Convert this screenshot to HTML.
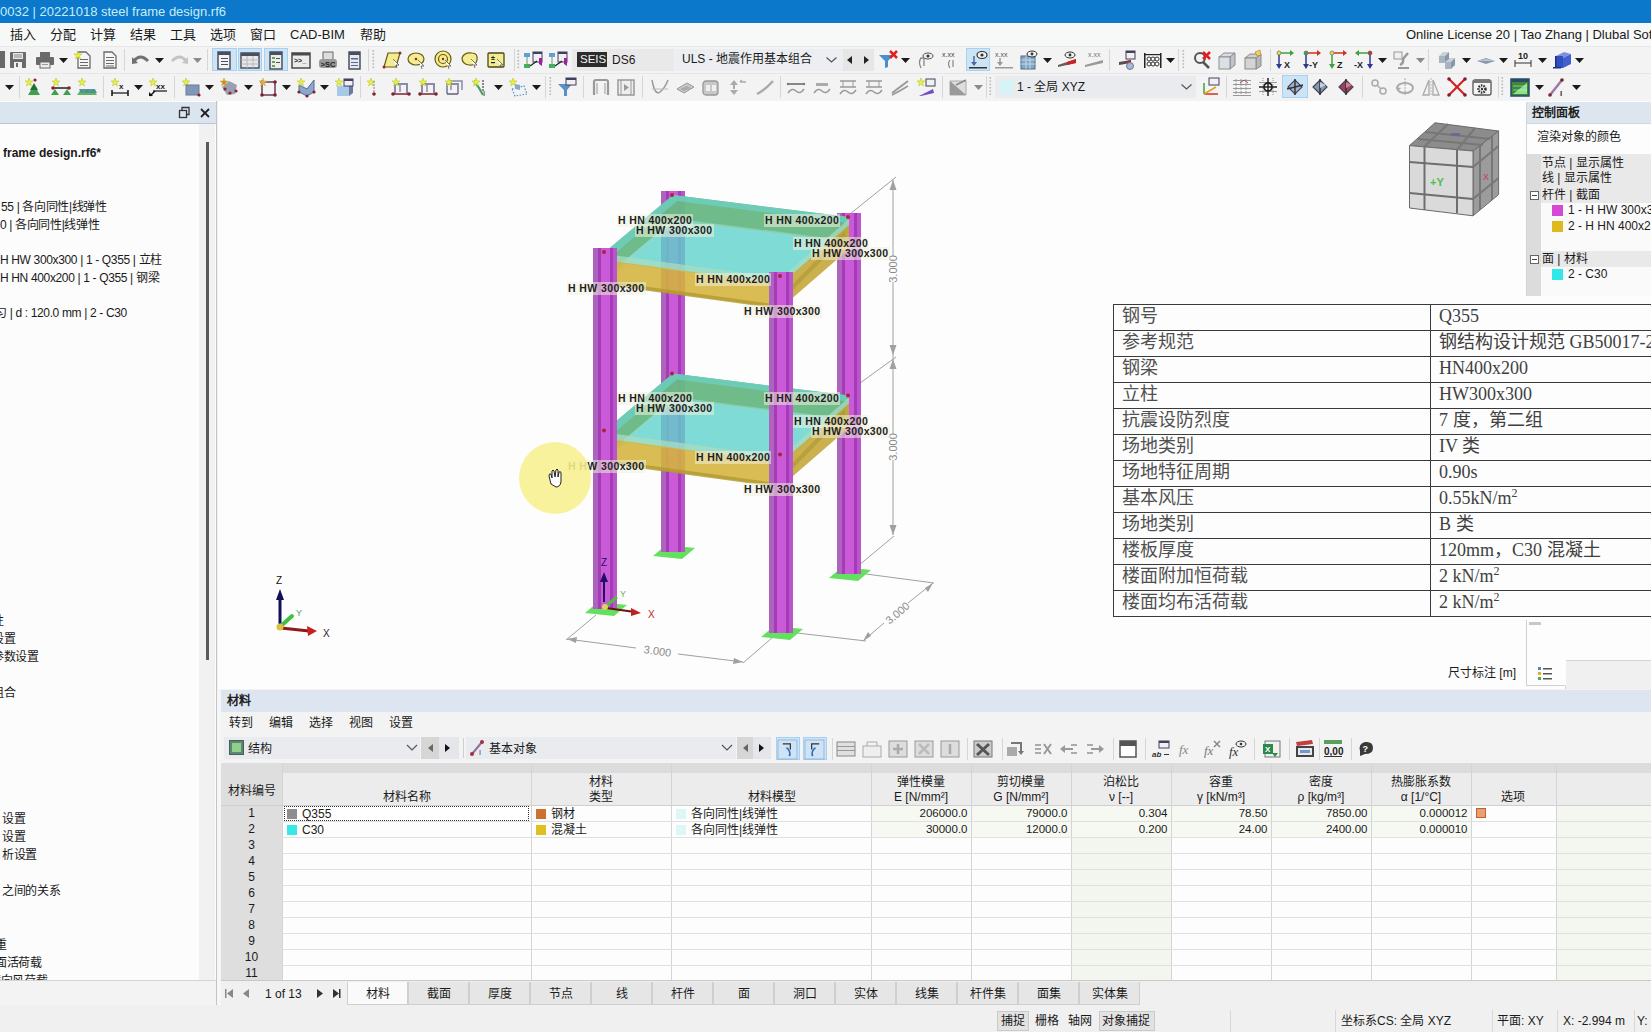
<!DOCTYPE html><html lang="zh-CN"><head><meta charset="utf-8"><style>
*{margin:0;padding:0;box-sizing:border-box}
html,body{width:1651px;height:1032px;overflow:hidden;background:#f0f0f0;font-family:"Liberation Sans",sans-serif;font-size:12px;color:#1a1a1a}
.a{position:absolute}
.t{position:absolute;white-space:nowrap;line-height:1}
.sp{font-size:12px;vertical-align:7px;line-height:0}
svg{position:absolute;overflow:visible}
</style></head><body>
<div class="a" style="left:0px;top:0px;width:1651px;height:23px;background:#0b78cc"></div>
<div class="t" style="left:0px;top:5px;font-size:13px;color:#c4eefa;">0032 | 20221018 steel frame design.rf6</div>
<div class="a" style="left:0px;top:23px;width:1651px;height:23px;background:#f7f8f8"></div>
<div class="t" style="left:10px;top:28px;font-size:13px;color:#1a1a1a;">插入</div>
<div class="t" style="left:50px;top:28px;font-size:13px;color:#1a1a1a;">分配</div>
<div class="t" style="left:90px;top:28px;font-size:13px;color:#1a1a1a;">计算</div>
<div class="t" style="left:130px;top:28px;font-size:13px;color:#1a1a1a;">结果</div>
<div class="t" style="left:170px;top:28px;font-size:13px;color:#1a1a1a;">工具</div>
<div class="t" style="left:210px;top:28px;font-size:13px;color:#1a1a1a;">选项</div>
<div class="t" style="left:250px;top:28px;font-size:13px;color:#1a1a1a;">窗口</div>
<div class="t" style="left:290px;top:28px;font-size:13px;color:#1a1a1a;">CAD-BIM</div>
<div class="t" style="left:360px;top:28px;font-size:13px;color:#1a1a1a;">帮助</div>
<div class="t" style="left:1406px;top:28px;font-size:13px;color:#1a1a1a;">Online License 20 | Tao Zhang | Dlubal Software</div>
<div class="a" style="left:0px;top:46px;width:1651px;height:55px;background:#f3f3f3;border-top:1px solid #e8e8e8"></div>
<div class="a" style="left:0px;top:73px;width:1651px;height:1px;background:#e6e6e6"></div>
<div class="a" style="left:0px;top:51px;width:5px;height:17px;background:#6a6a6a"></div>
<svg class="a" style="left:8px;top:50.0px" width="20" height="20" viewBox="0 0 20 20"><rect x="2" y="2" width="16" height="16" rx="1" fill="#6a6a6a"/><rect x="5" y="3" width="10" height="6" fill="#e8e8e8"/><rect x="6" y="4.5" width="8" height="1" fill="#888"/><rect x="6" y="6.5" width="8" height="1" fill="#888"/><rect x="6" y="12" width="8" height="6" fill="#f0f0f0"/><rect x="8" y="13" width="2" height="4" fill="#6a6a6a"/></svg>
<svg class="a" style="left:35px;top:50.0px" width="20" height="20" viewBox="0 0 20 20"><rect x="5" y="2" width="10" height="5" fill="#6a6a6a"/><rect x="1" y="7" width="18" height="8" rx="1" fill="#6a6a6a"/><rect x="5" y="12" width="10" height="6" fill="#eee" stroke="#6a6a6a"/><rect x="7" y="14" width="6" height="1" fill="#999"/></svg>
<svg class="a" style="left:58.5px;top:58px" width="9" height="5"><polygon points="0,0 9,0 4.5,5" fill="#1a1a1a"/></svg>
<svg class="a" style="left:73px;top:50.0px" width="20" height="20" viewBox="0 0 20 20"><path d="M5,2 H13 L17,6 V18 H5 Z" fill="#f6f6f6" stroke="#6a6a6a" stroke-width="1.3"/><rect x="7" y="9" width="8" height="1" fill="#6a6a6a"/><rect x="7" y="12" width="8" height="1" fill="#6a6a6a"/><rect x="7" y="15" width="8" height="1" fill="#6a6a6a"/><polygon points="5,1 6,4 9,4 6.5,6 7.5,9 5,7 2.5,9 3.5,6 1,4 4,4" fill="#e8f040" stroke="#b0c020" stroke-width="0.5"/></svg>
<svg class="a" style="left:100px;top:50.0px" width="20" height="20" viewBox="0 0 20 20"><path d="M4,2 H12 L16,6 V18 H4 Z" fill="#f6f6f6" stroke="#6a6a6a" stroke-width="1.3"/><rect x="6" y="7" width="8" height="1" fill="#6a6a6a"/><rect x="6" y="10" width="8" height="1" fill="#6a6a6a"/><rect x="6" y="13" width="8" height="1" fill="#6a6a6a"/><rect x="6" y="15.5" width="8" height="1" fill="#6a6a6a"/></svg>
<div class="a" style="left:124px;top:49px;width:1px;height:22px;background:#d6d6d6"></div>
<svg class="a" style="left:131px;top:50.0px" width="20" height="20" viewBox="0 0 20 20"><path d="M3,11 Q9,3 17,11" fill="none" stroke="#707070" stroke-width="3"/><polygon points="1,7 7,13 1,14" fill="#707070"/></svg>
<svg class="a" style="left:154.5px;top:58px" width="9" height="5"><polygon points="0,0 9,0 4.5,5" fill="#1a1a1a"/></svg>
<svg class="a" style="left:169px;top:50.0px" width="20" height="20" viewBox="0 0 20 20"><path d="M3,11 Q11,3 17,11" fill="none" stroke="#c4c4c4" stroke-width="3"/><polygon points="19,7 13,13 19,14" fill="#c4c4c4"/></svg>
<svg class="a" style="left:192.5px;top:58px" width="9" height="5"><polygon points="0,0 9,0 4.5,5" fill="#8a8a8a"/></svg>
<div class="a" style="left:207px;top:49px;width:1px;height:22px;background:#d6d6d6"></div>
<div class="a" style="left:212px;top:48px;width:25px;height:23px;background:#cde4f7;border:1px solid #a8d0f0"></div>
<div class="a" style="left:238px;top:48px;width:24px;height:23px;background:#cde4f7;border:1px solid #a8d0f0"></div>
<div class="a" style="left:264px;top:48px;width:24px;height:23px;background:#cde4f7;border:1px solid #a8d0f0"></div>
<svg class="a" style="left:214px;top:50.0px" width="20" height="20" viewBox="0 0 20 20"><rect x="4" y="2" width="12" height="17" fill="#f4f4f4" stroke="#4a5060" stroke-width="1.5"/><rect x="4" y="2" width="12" height="3" fill="#4a5060"/><g fill="#4a5060"><rect x="7" y="8" width="7" height="1"/><rect x="7" y="11" width="7" height="1"/><rect x="7" y="14" width="7" height="1"/></g></svg>
<svg class="a" style="left:240px;top:50.0px" width="20" height="20" viewBox="0 0 20 20"><rect x="1" y="3" width="18" height="15" fill="#e8e8e8" stroke="#4a5060" stroke-width="1.5"/><rect x="1" y="3" width="18" height="3" fill="#4a5060"/><g stroke="#b8b8b8" stroke-width="1"><line x1="1" y1="10" x2="19" y2="10"/><line x1="1" y1="14" x2="19" y2="14"/><line x1="7" y1="6" x2="7" y2="18"/><line x1="13" y1="6" x2="13" y2="18"/></g></svg>
<svg class="a" style="left:266px;top:50.0px" width="20" height="20" viewBox="0 0 20 20"><rect x="4" y="2" width="12" height="17" fill="#e8f0e8" stroke="#4a5060" stroke-width="1.5"/><rect x="4" y="2" width="12" height="3" fill="#4a5060"/><g fill="#7a9a60"><rect x="6" y="7" width="3" height="2"/><rect x="6" y="11" width="3" height="2"/><rect x="6" y="15" width="3" height="2"/></g><g fill="#4a5060"><rect x="10" y="8" width="4" height="1"/><rect x="10" y="12" width="4" height="1"/></g></svg>
<svg class="a" style="left:291px;top:50.0px" width="20" height="20" viewBox="0 0 20 20"><rect x="1" y="3" width="18" height="15" fill="#ececec" stroke="#4a4a4a" stroke-width="1.5"/><rect x="1" y="3" width="18" height="2.5" fill="#4a4a4a"/><text x="3" y="13" font-size="7" font-weight="bold" fill="#222">&gt;&gt;_</text></svg>
<svg class="a" style="left:318px;top:50.0px" width="20" height="20" viewBox="0 0 20 20"><rect x="5" y="2" width="10" height="8" fill="#ddd" stroke="#666"/><rect x="1" y="9" width="18" height="9" rx="3" fill="#999"/><text x="2.5" y="16.5" font-size="7.5" font-weight="bold" fill="#222">&gt;SC</text></svg>
<svg class="a" style="left:344px;top:50.0px" width="20" height="20" viewBox="0 0 20 20"><rect x="5" y="2" width="11" height="17" fill="#e8e8f0" stroke="#4a5060" stroke-width="1.5"/><rect x="5" y="2" width="11" height="3" fill="#4a5060"/><g fill="#5a6a90"><rect x="7" y="8" width="7" height="1.5"/><rect x="7" y="12" width="7" height="1"/><rect x="7" y="15" width="7" height="1"/></g></svg>
<div class="a" style="left:368px;top:49px;width:1px;height:22px;background:#d6d6d6"></div>
<svg class="a" style="left:372px;top:50px" width="3" height="20"><rect x="0.5" y="0.0" width="1.6" height="1.6" fill="#b8b8b8"/><rect x="0.5" y="3.3" width="1.6" height="1.6" fill="#b8b8b8"/><rect x="0.5" y="6.6" width="1.6" height="1.6" fill="#b8b8b8"/><rect x="0.5" y="9.899999999999999" width="1.6" height="1.6" fill="#b8b8b8"/><rect x="0.5" y="13.2" width="1.6" height="1.6" fill="#b8b8b8"/><rect x="0.5" y="16.5" width="1.6" height="1.6" fill="#b8b8b8"/></svg>
<svg class="a" style="left:382px;top:50.0px" width="20" height="20" viewBox="0 0 20 20"><polygon points="6,3 18,3 14,17 2,17" fill="#f4ec90" stroke="#6a5a10" stroke-width="1.2"/><circle cx="2" cy="17" r="1.5" fill="#903020"/><circle cx="18" cy="3" r="1.5" fill="#903020"/><path d="M11,9 L17,15 L14,15 L15,18" fill="#fff" stroke="#555" stroke-width="0.8"/></svg>
<svg class="a" style="left:407px;top:50.0px" width="20" height="20" viewBox="0 0 20 20"><ellipse cx="9" cy="9" rx="8" ry="6" fill="#f4ec90" stroke="#6a5a10" stroke-width="1.2"/><circle cx="9" cy="9" r="1.3" fill="#903020"/><path d="M11,10 L17,16 L14,16 L15,19" fill="#fff" stroke="#555" stroke-width="0.8"/></svg>
<svg class="a" style="left:434px;top:50.0px" width="20" height="20" viewBox="0 0 20 20"><circle cx="9" cy="9" r="8" fill="#f4ec90" stroke="#6a5a10" stroke-width="1.2"/><circle cx="9" cy="9" r="4.5" fill="none" stroke="#6a5a10" stroke-width="1.2"/><circle cx="9" cy="9" r="1.2" fill="#903020"/><path d="M11,10 L17,16 L14,16 L15,19" fill="#fff" stroke="#555" stroke-width="0.8"/></svg>
<svg class="a" style="left:460px;top:50.0px" width="20" height="20" viewBox="0 0 20 20"><path d="M2,8 Q4,2 12,3 Q18,3 17,10 Q16,16 9,15 Q2,14 2,8 Z" fill="#f4ec90" stroke="#6a5a10" stroke-width="1.2"/><path d="M11,9 L17,15 L14,15 L15,18" fill="#fff" stroke="#555" stroke-width="0.8"/></svg>
<svg class="a" style="left:486px;top:50.0px" width="20" height="20" viewBox="0 0 20 20"><rect x="2" y="3" width="16" height="14" rx="1" fill="#f4ec90" stroke="#4a4a10" stroke-width="1.3"/><text x="5" y="10" font-size="7" font-weight="bold" fill="#222">±</text><rect x="5" y="12" width="4" height="1.2" fill="#222"/><path d="M11,9 L17,15 L14,15 L15,18" fill="#fff" stroke="#555" stroke-width="0.8"/></svg>
<div class="a" style="left:514px;top:49px;width:1px;height:22px;background:#d6d6d6"></div>
<svg class="a" style="left:517px;top:50px" width="3" height="20"><rect x="0.5" y="0.0" width="1.6" height="1.6" fill="#b8b8b8"/><rect x="0.5" y="3.3" width="1.6" height="1.6" fill="#b8b8b8"/><rect x="0.5" y="6.6" width="1.6" height="1.6" fill="#b8b8b8"/><rect x="0.5" y="9.899999999999999" width="1.6" height="1.6" fill="#b8b8b8"/><rect x="0.5" y="13.2" width="1.6" height="1.6" fill="#b8b8b8"/><rect x="0.5" y="16.5" width="1.6" height="1.6" fill="#b8b8b8"/></svg>
<svg class="a" style="left:523px;top:50.0px" width="20" height="20" viewBox="0 0 20 20"><rect x="1" y="3" width="6" height="4" fill="#60a0d0"/><rect x="1" y="14" width="6" height="4" fill="#40b060"/><rect x="10" y="2" width="9" height="10" fill="#f0f0f0" stroke="#404060"/><rect x="10" y="2" width="9" height="2" fill="#404060"/><polygon points="16,8 19,8 19,16 16,14" fill="#a020a0"/><line x1="7" y1="16" x2="14" y2="11" stroke="#222" stroke-width="1.3"/><line x1="4" y1="7" x2="4" y2="14" stroke="#60a060"/></svg>
<svg class="a" style="left:548px;top:50.0px" width="20" height="20" viewBox="0 0 20 20"><rect x="1" y="3" width="6" height="4" fill="#60a0d0"/><rect x="1" y="14" width="6" height="4" fill="#40b060"/><rect x="10" y="2" width="9" height="10" fill="#f0f0f0" stroke="#404060"/><rect x="10" y="2" width="9" height="2" fill="#404060"/><polygon points="16,8 19,8 19,16 16,14" fill="#a020a0"/><line x1="7" y1="16" x2="14" y2="11" stroke="#222" stroke-width="1.3"/><line x1="4" y1="7" x2="4" y2="14" stroke="#60a060"/></svg>
<div class="a" style="left:572px;top:49px;width:102px;height:22px;background:#e9e9ea"></div>
<div class="a" style="left:675px;top:49px;width:168px;height:22px;background:#eceef1"></div>
<div class="a" style="left:843px;top:49px;width:31px;height:22px;background:#e6e6e6"></div>
<div class="a" style="left:577px;top:52px;width:30px;height:15px;background:#2c2c2c"></div>
<div class="t" style="left:580px;top:54px;font-size:11.5px;color:#f4f4f4;">SEIS</div>
<div class="t" style="left:612px;top:54px;font-size:12px;color:#1a1a1a;">DS6</div>
<div class="t" style="left:682px;top:53px;font-size:12px;color:#1a1a1a;">ULS - 地震作用基本组合</div>
<svg class="a" style="left:826px;top:57px" width="11" height="6"><polyline points="0.5,0.5 5.5,5 10.5,0.5" fill="none" stroke="#555" stroke-width="1.2"/></svg>
<svg class="a" style="left:847px;top:56px" width="6" height="8"><polygon points="5,0 0,4 5,8" fill="#222"/></svg>
<svg class="a" style="left:864px;top:56px" width="6" height="8"><polygon points="0,0 5,4 0,8" fill="#222"/></svg>
<svg class="a" style="left:878px;top:50.0px" width="20" height="20" viewBox="0 0 20 20"><polygon points="1,5 15,5 10,11 10,17 7,18 7,11" fill="#4a90c8"/><line x1="12" y1="1" x2="19" y2="8" stroke="#e02020" stroke-width="2.5"/><line x1="19" y1="1" x2="12" y2="8" stroke="#e02020" stroke-width="2.5"/></svg>
<svg class="a" style="left:900.5px;top:58px" width="9" height="5"><polygon points="0,0 9,0 4.5,5" fill="#1a1a1a"/></svg>
<svg class="a" style="left:916px;top:50.0px" width="20" height="20" viewBox="0 0 20 20"><path d="M5,18 Q2,12 5,8 L8,8 L8,16" fill="none" stroke="#888" stroke-width="1.3"/><ellipse cx="12" cy="6" rx="5" ry="3" fill="#eee" stroke="#555"/><circle cx="12" cy="6" r="1.5" fill="#333"/></svg>
<svg class="a" style="left:942px;top:50.0px" width="20" height="20" viewBox="0 0 20 20"><text x="0" y="7" font-size="7" fill="#444">x.xx</text><path d="M8,10 Q5,14 8,18" fill="none" stroke="#888" stroke-width="1.2"/><path d="M11,10 L11,17" stroke="#888" stroke-width="1.2"/></svg>
<div class="a" style="left:966px;top:48px;width:24px;height:23px;background:#cde4f7;border:1px solid #a8d0f0"></div>
<svg class="a" style="left:968px;top:50.0px" width="20" height="20" viewBox="0 0 20 20"><ellipse cx="14" cy="5" rx="5" ry="3.5" fill="#f0f0f0" stroke="#333" stroke-width="1.2"/><circle cx="14" cy="5" r="1.6" fill="#333"/><line x1="6" y1="6" x2="6" y2="15" stroke="#4a6aa0" stroke-width="1.5"/><polygon points="3,12 9,12 6,16" fill="#4a6aa0"/><rect x="1" y="17" width="18" height="1.5" fill="#333"/></svg>
<svg class="a" style="left:994px;top:50.0px" width="20" height="20" viewBox="0 0 20 20"><text x="1" y="7" font-size="7" fill="#555">x.xx</text><line x1="6" y1="8" x2="6" y2="15" stroke="#999" stroke-width="1.5"/><polygon points="3,12 9,12 6,16" fill="#999"/><rect x="1" y="17" width="18" height="1.5" fill="#999"/></svg>
<svg class="a" style="left:1019px;top:50.0px" width="20" height="20" viewBox="0 0 20 20"><rect x="2" y="6" width="14" height="13" fill="#80a8c8" stroke="#4a6a8a"/><g stroke="#dde" stroke-width="0.8"><line x1="2" y1="10" x2="16" y2="10"/><line x1="2" y1="14" x2="16" y2="14"/><line x1="7" y1="6" x2="7" y2="19"/><line x1="11" y1="6" x2="11" y2="19"/></g><ellipse cx="13" cy="4" rx="5" ry="3" fill="#f0f0f0" stroke="#333"/><circle cx="13" cy="4" r="1.4" fill="#333"/></svg>
<svg class="a" style="left:1042.5px;top:58px" width="9" height="5"><polygon points="0,0 9,0 4.5,5" fill="#1a1a1a"/></svg>
<svg class="a" style="left:1057px;top:50.0px" width="20" height="20" viewBox="0 0 20 20"><polygon points="1,15 19,9 19,13 1,17" fill="#606060"/><polygon points="10,12 19,9 19,13 10,15" fill="#d02020"/><ellipse cx="13" cy="5" rx="5" ry="3" fill="#f0f0f0" stroke="#333"/><circle cx="13" cy="5" r="1.4" fill="#333"/></svg>
<svg class="a" style="left:1084px;top:50.0px" width="20" height="20" viewBox="0 0 20 20"><text x="4" y="7" font-size="7" fill="#777">x.xx</text><polygon points="1,15 19,10 19,13 1,17" fill="#999"/></svg>
<div class="a" style="left:1109px;top:49px;width:1px;height:22px;background:#d6d6d6"></div>
<svg class="a" style="left:1117px;top:50.0px" width="20" height="20" viewBox="0 0 20 20"><rect x="9" y="1" width="9" height="8" fill="#f0f0f0" stroke="#404060"/><rect x="9" y="1" width="9" height="2" fill="#404060"/><polygon points="2,12 14,10 14,13 2,15" fill="#505050"/><polygon points="10,11 14,10 14,13 10,14" fill="#c02020"/><circle cx="13" cy="16" r="3.5" fill="#a8b8d8" stroke="#6a7a9a"/></svg>
<svg class="a" style="left:1143px;top:50.0px" width="20" height="20" viewBox="0 0 20 20"><rect x="1" y="3" width="1.5" height="15" fill="#222"/><rect x="17" y="3" width="1.5" height="15" fill="#222"/><rect x="1" y="4" width="17" height="1.2" fill="#222"/><g fill="#fff" stroke="#333" stroke-width="1"><circle cx="6" cy="9" r="2"/><circle cx="10" cy="9" r="2"/><circle cx="14" cy="9" r="2"/><circle cx="6" cy="14" r="2"/><circle cx="10" cy="14" r="2"/><circle cx="14" cy="14" r="2"/></g></svg>
<svg class="a" style="left:1165.5px;top:58px" width="9" height="5"><polygon points="0,0 9,0 4.5,5" fill="#1a1a1a"/></svg>
<div class="a" style="left:1178px;top:49px;width:1px;height:22px;background:#d6d6d6"></div>
<svg class="a" style="left:1182px;top:50px" width="3" height="20"><rect x="0.5" y="0.0" width="1.6" height="1.6" fill="#b8b8b8"/><rect x="0.5" y="3.3" width="1.6" height="1.6" fill="#b8b8b8"/><rect x="0.5" y="6.6" width="1.6" height="1.6" fill="#b8b8b8"/><rect x="0.5" y="9.899999999999999" width="1.6" height="1.6" fill="#b8b8b8"/><rect x="0.5" y="13.2" width="1.6" height="1.6" fill="#b8b8b8"/><rect x="0.5" y="16.5" width="1.6" height="1.6" fill="#b8b8b8"/></svg>
<svg class="a" style="left:1192px;top:50.0px" width="20" height="20" viewBox="0 0 20 20"><circle cx="8" cy="8" r="5" fill="none" stroke="#555" stroke-width="2"/><line x1="11" y1="12" x2="17" y2="18" stroke="#555" stroke-width="2.5"/><line x1="11" y1="2" x2="18" y2="9" stroke="#e02020" stroke-width="2.5"/><line x1="18" y1="2" x2="11" y2="9" stroke="#e02020" stroke-width="2.5"/></svg>
<svg class="a" style="left:1217px;top:50.0px" width="20" height="20" viewBox="0 0 20 20"><polygon points="2,7 7,3 18,3 13,7" fill="#d8dce0" stroke="#8a8e92"/><polygon points="13,7 18,3 18,15 13,19" fill="#c0c4c8" stroke="#8a8e92"/><rect x="2" y="7" width="11" height="12" fill="#dcdfe3" stroke="#8a8e92"/></svg>
<svg class="a" style="left:1243px;top:50.0px" width="20" height="20" viewBox="0 0 20 20"><polygon points="2,8 7,4 18,4 13,8" fill="#d0d0d0" stroke="#8a8a8a"/><polygon points="13,8 18,4 18,16 13,19" fill="#b8b8b8" stroke="#8a8a8a"/><rect x="2" y="8" width="11" height="11" fill="#d4d4d4" stroke="#8a8a8a"/><polygon points="12,2 17,0 18,5 14,6" fill="#f0d060" stroke="#a08020" stroke-width="0.6"/></svg>
<div class="a" style="left:1270px;top:49px;width:1px;height:22px;background:#d6d6d6"></div>
<svg class="a" style="left:1275px;top:50.0px" width="20" height="20" viewBox="0 0 20 20"><circle cx="4" cy="3" r="2" fill="#e8e040" stroke="#555" stroke-width="0.6"/><line x1="4" y1="5" x2="4" y2="16" stroke="#2a3a90" stroke-width="1.5"/><polygon points="1,14 7,14 4,19" fill="#2a3a90"/><line x1="6" y1="3" x2="17" y2="3" stroke="#40a040" stroke-width="1.5"/><polygon points="15,0 19,3 15,6" fill="#40a040"/><text x="9" y="18" font-size="9" font-weight="bold" fill="#222">X</text></svg>
<svg class="a" style="left:1302px;top:50.0px" width="20" height="20" viewBox="0 0 20 20"><circle cx="4" cy="3" r="2" fill="#40a040" stroke="#555" stroke-width="0.6"/><line x1="4" y1="5" x2="4" y2="16" stroke="#2a3a90" stroke-width="1.5"/><polygon points="1,14 7,14 4,19" fill="#2a3a90"/><line x1="6" y1="3" x2="17" y2="3" stroke="#d03020" stroke-width="1.5"/><polygon points="15,0 19,3 15,6" fill="#d03020"/><text x="7" y="18" font-size="9" font-weight="bold" fill="#222">-Y</text></svg>
<svg class="a" style="left:1328px;top:50.0px" width="20" height="20" viewBox="0 0 20 20"><circle cx="4" cy="3" r="2" fill="#e8e040" stroke="#555" stroke-width="0.6"/><line x1="4" y1="5" x2="4" y2="16" stroke="#40a040" stroke-width="1.5"/><polygon points="1,14 7,14 4,19" fill="#40a040"/><line x1="6" y1="3" x2="17" y2="3" stroke="#d03020" stroke-width="1.5"/><polygon points="15,0 19,3 15,6" fill="#d03020"/><text x="9" y="18" font-size="9" font-weight="bold" fill="#222">Z</text></svg>
<svg class="a" style="left:1354px;top:50.0px" width="20" height="20" viewBox="0 0 20 20"><circle cx="16" cy="3" r="2" fill="#d03020" stroke="#555" stroke-width="0.6"/><line x1="16" y1="5" x2="16" y2="16" stroke="#2a3a90" stroke-width="1.5"/><polygon points="13,14 19,14 16,19" fill="#2a3a90"/><line x1="3" y1="3" x2="14" y2="3" stroke="#40a040" stroke-width="1.5"/><polygon points="5,0 1,3 5,6" fill="#40a040"/><text x="0" y="18" font-size="9" font-weight="bold" fill="#222">-X</text></svg>
<svg class="a" style="left:1377.5px;top:58px" width="9" height="5"><polygon points="0,0 9,0 4.5,5" fill="#1a1a1a"/></svg>
<svg class="a" style="left:1392px;top:50.0px" width="20" height="20" viewBox="0 0 20 20"><rect x="2" y="2" width="8" height="7" fill="#f0f0f0" stroke="#999"/><line x1="6" y1="18" x2="17" y2="18" stroke="#999" stroke-width="2"/><path d="M8,15 Q12,13 11,9 L16,3" fill="none" stroke="#999" stroke-width="2.5"/></svg>
<svg class="a" style="left:1415.5px;top:58px" width="9" height="5"><polygon points="0,0 9,0 4.5,5" fill="#8a8a8a"/></svg>
<div class="a" style="left:1428px;top:49px;width:1px;height:22px;background:#d6d6d6"></div>
<svg class="a" style="left:1437px;top:50.0px" width="20" height="20" viewBox="0 0 20 20"><polygon points="2,6 6,2 12,2 8,6" fill="#c8d0d8"/><rect x="2" y="6" width="6" height="7" fill="#a8b4c0"/><polygon points="8,12 12,8 18,8 14,12" fill="#c8d0d8"/><rect x="8" y="12" width="6" height="7" fill="#a8b4c0"/><polygon points="14,12 18,8 18,15 14,19" fill="#8898a8"/><polygon points="8,6 12,2 12,9 8,12" fill="#8898a8"/></svg>
<svg class="a" style="left:1461.5px;top:58px" width="9" height="5"><polygon points="0,0 9,0 4.5,5" fill="#1a1a1a"/></svg>
<svg class="a" style="left:1476px;top:50.0px" width="20" height="20" viewBox="0 0 20 20"><polygon points="1,11 10,8 19,11 10,14" fill="#8a9aaa"/><polygon points="1,11 10,9 19,11" fill="#b8c8d8"/></svg>
<svg class="a" style="left:1498.5px;top:58px" width="9" height="5"><polygon points="0,0 9,0 4.5,5" fill="#1a1a1a"/></svg>
<svg class="a" style="left:1513px;top:50.0px" width="20" height="20" viewBox="0 0 20 20"><text x="5" y="9" font-size="9" font-weight="bold" fill="#222">10</text><line x1="2" y1="13" x2="18" y2="13" stroke="#333" stroke-width="1"/><line x1="2" y1="10" x2="2" y2="17" stroke="#333"/><line x1="18" y1="10" x2="18" y2="17" stroke="#333"/></svg>
<svg class="a" style="left:1537.5px;top:58px" width="9" height="5"><polygon points="0,0 9,0 4.5,5" fill="#1a1a1a"/></svg>
<svg class="a" style="left:1552px;top:50.0px" width="20" height="20" viewBox="0 0 20 20"><polygon points="4,6 12,2 19,4 11,8" fill="#8090e0"/><rect x="4" y="6" width="7" height="12" fill="#3050c0"/><polygon points="11,8 19,4 19,14 11,18" fill="#4060d0"/><rect x="1" y="17" width="8" height="1.5" fill="#203080"/><rect x="3" y="6" width="1.5" height="12" fill="#203080"/></svg>
<svg class="a" style="left:1574.5px;top:58px" width="9" height="5"><polygon points="0,0 9,0 4.5,5" fill="#1a1a1a"/></svg>
<svg class="a" style="left:4.5px;top:85px" width="9" height="5"><polygon points="0,0 9,0 4.5,5" fill="#1a1a1a"/></svg>
<div class="a" style="left:19px;top:76px;width:1px;height:22px;background:#d6d6d6"></div>
<svg class="a" style="left:24px;top:77.0px" width="20" height="20" viewBox="0 0 20 20"><polygon points="5,1 6,4 9,4 6.5,6 7.5,9 5,7 2.5,9 3.5,6 1,4 4,4" fill="#e8f040" stroke="#b0c020" stroke-width="0.5"/><circle cx="11" cy="3" r="1.6" fill="#902020"/><polygon points="10,8 16,18 4,18" fill="#40a050"/><polygon points="10,6 14,13 6,13" fill="#207030"/></svg>
<svg class="a" style="left:51px;top:77.0px" width="20" height="20" viewBox="0 0 20 20"><polygon points="5,1 6,4 9,4 6.5,6 7.5,9 5,7 2.5,9 3.5,6 1,4 4,4" fill="#e8f040" stroke="#b0c020" stroke-width="0.5"/><line x1="2" y1="11" x2="18" y2="11" stroke="#222" stroke-width="1.5"/><circle cx="2" cy="11" r="1.8" fill="#902020"/><circle cx="18" cy="11" r="1.8" fill="#902020"/><polygon points="4,12 8,18 0,18" fill="#40a050"/><polygon points="16,12 20,18 12,18" fill="#40a050"/></svg>
<svg class="a" style="left:77px;top:77.0px" width="20" height="20" viewBox="0 0 20 20"><polygon points="5,1 6,4 9,4 6.5,6 7.5,9 5,7 2.5,9 3.5,6 1,4 4,4" fill="#e8f040" stroke="#b0c020" stroke-width="0.5"/><polygon points="2,12 18,12 20,16 4,16" fill="#5a90b0"/><polygon points="4,12 8,18 0,18" fill="#40a050" opacity="0.8"/><polygon points="10,12 14,18 6,18" fill="#40a050" opacity="0.8"/><polygon points="16,12 20,18 12,18" fill="#40a050" opacity="0.8"/></svg>
<div class="a" style="left:103px;top:76px;width:1px;height:22px;background:#d6d6d6"></div>
<svg class="a" style="left:110px;top:77.0px" width="20" height="20" viewBox="0 0 20 20"><polygon points="5,1 6,4 9,4 6.5,6 7.5,9 5,7 2.5,9 3.5,6 1,4 4,4" fill="#e8f040" stroke="#b0c020" stroke-width="0.5"/><text x="9" y="12" font-size="8" font-weight="bold" fill="#222">x</text><line x1="2" y1="16" x2="18" y2="16" stroke="#111" stroke-width="1.2"/><line x1="2" y1="13" x2="2" y2="19" stroke="#111" stroke-width="1.5"/><line x1="18" y1="13" x2="18" y2="19" stroke="#111" stroke-width="1.5"/></svg>
<svg class="a" style="left:133.5px;top:85px" width="9" height="5"><polygon points="0,0 9,0 4.5,5" fill="#1a1a1a"/></svg>
<svg class="a" style="left:148px;top:77.0px" width="20" height="20" viewBox="0 0 20 20"><polygon points="5,1 6,4 9,4 6.5,6 7.5,9 5,7 2.5,9 3.5,6 1,4 4,4" fill="#e8f040" stroke="#b0c020" stroke-width="0.5"/><text x="8" y="12" font-size="8" font-weight="bold" fill="#222">xx</text><line x1="5" y1="14" x2="19" y2="14" stroke="#111" stroke-width="1.2"/><line x1="2" y1="19" x2="7" y2="14" stroke="#111" stroke-width="1.5"/><polygon points="1,19 1,15 5,19" fill="#111"/></svg>
<div class="a" style="left:174px;top:76px;width:1px;height:22px;background:#d6d6d6"></div>
<svg class="a" style="left:181px;top:77.0px" width="20" height="20" viewBox="0 0 20 20"><polygon points="5,1 6,4 9,4 6.5,6 7.5,9 5,7 2.5,9 3.5,6 1,4 4,4" fill="#e8f040" stroke="#b0c020" stroke-width="0.5"/><rect x="5" y="8" width="13" height="10" fill="#8098b8" stroke="#6a7a9a"/><circle cx="18" cy="18" r="1.6" fill="#902020"/></svg>
<svg class="a" style="left:204.5px;top:85px" width="9" height="5"><polygon points="0,0 9,0 4.5,5" fill="#1a1a1a"/></svg>
<svg class="a" style="left:219px;top:77.0px" width="20" height="20" viewBox="0 0 20 20"><polygon points="3,10 10,4 18,8 16,17 8,18" fill="#9aa0b0"/><circle cx="6" cy="12" r="1.6" fill="#902040"/><circle cx="11" cy="16" r="1.6" fill="#902040"/><circle cx="17" cy="14" r="1.6" fill="#902040"/><polygon points="5,1 6,4 9,4 6.5,6 7.5,9 5,7 2.5,9 3.5,6 1,4 4,4" fill="#e08030" stroke="#b0c020" stroke-width="0.5"/></svg>
<svg class="a" style="left:243.5px;top:85px" width="9" height="5"><polygon points="0,0 9,0 4.5,5" fill="#1a1a1a"/></svg>
<svg class="a" style="left:258px;top:77.0px" width="20" height="20" viewBox="0 0 20 20"><rect x="4" y="5" width="13" height="13" fill="none" stroke="#8a6a7a" stroke-width="2"/><circle cx="4" cy="5" r="1.8" fill="#802030"/><circle cx="17" cy="5" r="1.8" fill="#802030"/><circle cx="4" cy="18" r="1.8" fill="#802030"/><circle cx="17" cy="18" r="1.8" fill="#802030"/><polygon points="5,1 6,4 9,4 6.5,6 7.5,9 5,7 2.5,9 3.5,6 1,4 4,4" fill="#f0a060" stroke="#b0c020" stroke-width="0.5"/></svg>
<svg class="a" style="left:281.5px;top:85px" width="9" height="5"><polygon points="0,0 9,0 4.5,5" fill="#1a1a1a"/></svg>
<svg class="a" style="left:296px;top:77.0px" width="20" height="20" viewBox="0 0 20 20"><polygon points="3,8 11,12 18,3 18,15 11,19 3,15" fill="#88a8d0" stroke="#5a6a8a"/><circle cx="3" cy="15" r="1.6" fill="#802030"/><circle cx="11" cy="19" r="1.6" fill="#802030"/><circle cx="18" cy="15" r="1.6" fill="#802030"/><polygon points="5,1 6,4 9,4 6.5,6 7.5,9 5,7 2.5,9 3.5,6 1,4 4,4" fill="#e8f040" stroke="#b0c020" stroke-width="0.5"/></svg>
<svg class="a" style="left:319.5px;top:85px" width="9" height="5"><polygon points="0,0 9,0 4.5,5" fill="#1a1a1a"/></svg>
<svg class="a" style="left:334px;top:77.0px" width="20" height="20" viewBox="0 0 20 20"><polygon points="3,9 15,9 15,19 3,19" fill="#a8c8e8"/><polygon points="10,2 19,2 19,16 15,19 15,9 10,9" fill="#6a7a9a"/><rect x="10" y="2" width="9" height="7" fill="#f0f0f0" stroke="#404060"/><rect x="10" y="2" width="9" height="2" fill="#404060"/><polygon points="5,1 6,4 9,4 6.5,6 7.5,9 5,7 2.5,9 3.5,6 1,4 4,4" fill="#e8f040" stroke="#b0c020" stroke-width="0.5"/></svg>
<div class="a" style="left:360px;top:76px;width:1px;height:22px;background:#d6d6d6"></div>
<svg class="a" style="left:364px;top:77.0px" width="20" height="20" viewBox="0 0 20 20"><polygon points="7,1 8,4 11,4 8.5,6 9.5,9 7,7 4.5,9 5.5,6 3,4 6,4" fill="#e8f040" stroke="#b0c020" stroke-width="0.5"/><line x1="10" y1="4" x2="10" y2="16" stroke="#999" stroke-width="1.2" stroke-dasharray="2,1"/><circle cx="10" cy="17" r="1.8" fill="#802030"/></svg>
<svg class="a" style="left:391px;top:77.0px" width="20" height="20" viewBox="0 0 20 20"><path d="M4,16 V7 H16 V16" fill="none" stroke="#8a8aaa" stroke-width="2"/><line x1="9" y1="7" x2="9" y2="15" stroke="#8a8aaa" stroke-width="1.5"/><line x1="1" y1="17" x2="19" y2="17" stroke="#802030" stroke-width="1.5"/><circle cx="2" cy="17" r="1.8" fill="#802030"/><circle cx="18" cy="17" r="1.8" fill="#802030"/><polygon points="5,1 6,4 9,4 6.5,6 7.5,9 5,7 2.5,9 3.5,6 1,4 4,4" fill="#e8f040" stroke="#b0c020" stroke-width="0.5"/></svg>
<svg class="a" style="left:418px;top:77.0px" width="20" height="20" viewBox="0 0 20 20"><path d="M4,16 V7 H16 V16" fill="none" stroke="#8a8aaa" stroke-width="2"/><line x1="9" y1="7" x2="9" y2="15" stroke="#8a8aaa" stroke-width="1.5"/><line x1="1" y1="17" x2="19" y2="17" stroke="#802030" stroke-width="1.5"/><circle cx="2" cy="17" r="1.8" fill="#802030"/><circle cx="18" cy="17" r="1.8" fill="#802030"/><polygon points="5,1 6,4 9,4 6.5,6 7.5,9 5,7 2.5,9 3.5,6 1,4 4,4" fill="#e8f040" stroke="#b0c020" stroke-width="0.5"/></svg>
<svg class="a" style="left:444px;top:77.0px" width="20" height="20" viewBox="0 0 20 20"><path d="M3,17 V7 H14 V17" fill="none" stroke="#8a8aaa" stroke-width="1.8"/><path d="M7,13 V4 H18 V13" fill="none" stroke="#8a8aaa" stroke-width="1.5"/><line x1="3" y1="17" x2="14" y2="17" stroke="#6a5a7a" stroke-width="1.5"/><polygon points="5,1 6,4 9,4 6.5,6 7.5,9 5,7 2.5,9 3.5,6 1,4 4,4" fill="#e8f040" stroke="#b0c020" stroke-width="0.5"/></svg>
<svg class="a" style="left:471px;top:77.0px" width="20" height="20" viewBox="0 0 20 20"><path d="M3,4 Q8,10 12,18" fill="none" stroke="#40a060" stroke-width="2"/><line x1="12" y1="3" x2="12" y2="14" stroke="#222" stroke-dasharray="2,1"/><text x="12" y="19" font-size="8" fill="#333">I</text><polygon points="5,1 6,4 9,4 6.5,6 7.5,9 5,7 2.5,9 3.5,6 1,4 4,4" fill="#e8f040" stroke="#b0c020" stroke-width="0.5"/></svg>
<svg class="a" style="left:493.5px;top:85px" width="9" height="5"><polygon points="0,0 9,0 4.5,5" fill="#1a1a1a"/></svg>
<svg class="a" style="left:508px;top:77.0px" width="20" height="20" viewBox="0 0 20 20"><polygon points="5,1 6,4 9,4 6.5,6 7.5,9 5,7 2.5,9 3.5,6 1,4 4,4" fill="#e8f040" stroke="#b0c020" stroke-width="0.5"/><polygon points="4,12 16,9 19,17 7,19" fill="none" stroke="#4a90d0" stroke-dasharray="1.5,1.5" stroke-width="1.2"/><polygon points="7,7 12,8 12,13 7,12" fill="#8aa8c8"/></svg>
<svg class="a" style="left:531.5px;top:85px" width="9" height="5"><polygon points="0,0 9,0 4.5,5" fill="#1a1a1a"/></svg>
<div class="a" style="left:545px;top:76px;width:1px;height:22px;background:#d6d6d6"></div>
<svg class="a" style="left:549px;top:77px" width="3" height="20"><rect x="0.5" y="0.0" width="1.6" height="1.6" fill="#b8b8b8"/><rect x="0.5" y="3.3" width="1.6" height="1.6" fill="#b8b8b8"/><rect x="0.5" y="6.6" width="1.6" height="1.6" fill="#b8b8b8"/><rect x="0.5" y="9.899999999999999" width="1.6" height="1.6" fill="#b8b8b8"/><rect x="0.5" y="13.2" width="1.6" height="1.6" fill="#b8b8b8"/><rect x="0.5" y="16.5" width="1.6" height="1.6" fill="#b8b8b8"/></svg>
<svg class="a" style="left:557px;top:77.0px" width="20" height="20" viewBox="0 0 20 20"><polygon points="1,7 15,7 10,13 10,19 7,19 7,13" fill="#5a90c8"/><rect x="9" y="1" width="10" height="7" fill="#f0f0f0" stroke="#404060"/><rect x="9" y="1" width="10" height="2" fill="#404060"/></svg>
<div class="a" style="left:583px;top:76px;width:1px;height:22px;background:#d6d6d6"></div>
<svg class="a" style="left:591px;top:77.0px" width="20" height="20" viewBox="0 0 20 20"><path d="M3,18 V5 Q3,3 5,3 H15 Q17,3 17,5 V18" fill="none" stroke="#999" stroke-width="2.2"/><line x1="6" y1="6" x2="6" y2="17" stroke="#999"/><line x1="14" y1="6" x2="14" y2="17" stroke="#999"/></svg>
<svg class="a" style="left:616px;top:77.0px" width="20" height="20" viewBox="0 0 20 20"><rect x="2" y="3" width="16" height="15" fill="#eee" stroke="#999" stroke-width="1.5"/><line x1="5" y1="3" x2="5" y2="18" stroke="#999"/><line x1="15" y1="3" x2="15" y2="18" stroke="#999"/><polygon points="8,7 13,10.5 8,14" fill="#999"/></svg>
<div class="a" style="left:642px;top:76px;width:1px;height:22px;background:#d6d6d6"></div>
<svg class="a" style="left:650px;top:77.0px" width="20" height="20" viewBox="0 0 20 20"><path d="M2,3 Q5,19 10,15 Q15,11 18,3" fill="none" stroke="#999" stroke-width="1.5"/><line x1="2" y1="12" x2="18" y2="12" stroke="#bbb"/></svg>
<svg class="a" style="left:675px;top:77.0px" width="20" height="20" viewBox="0 0 20 20"><polygon points="2,12 12,6 19,10 9,16" fill="#c8c8c8" stroke="#999"/><polygon points="5,12 12,9 16,11 9,14" fill="#aaa"/></svg>
<svg class="a" style="left:701px;top:77.0px" width="20" height="20" viewBox="0 0 20 20"><rect x="2" y="4" width="15" height="14" rx="3" fill="#c8c8c8" stroke="#999" stroke-width="1.3"/><rect x="5" y="8" width="4" height="6" fill="#f0f0f0"/><rect x="11" y="8" width="4" height="6" fill="#f0f0f0"/></svg>
<svg class="a" style="left:728px;top:77.0px" width="20" height="20" viewBox="0 0 20 20"><polygon points="6,3 10,8 2,8" fill="#aaa"/><rect x="5" y="8" width="2" height="4" fill="#aaa"/><polygon points="6,18 10,13 2,13" fill="#aaa"/><path d="M12,5 H18 M12,5 L14,3" fill="none" stroke="#aaa" stroke-width="1.5"/></svg>
<svg class="a" style="left:755px;top:77.0px" width="20" height="20" viewBox="0 0 20 20"><path d="M2,17 Q10,13 18,4" fill="none" stroke="#aaa" stroke-width="2.5"/></svg>
<div class="a" style="left:780px;top:76px;width:1px;height:22px;background:#d6d6d6"></div>
<svg class="a" style="left:786px;top:77.0px" width="20" height="20" viewBox="0 0 20 20"><line x1="2" y1="7" x2="18" y2="7" stroke="#888" stroke-width="2"/><circle cx="2" cy="7" r="1.2" fill="#777"/><circle cx="18" cy="7" r="1.2" fill="#777"/><path d="M2,16 Q6,10 10,14 Q14,18 18,12" fill="none" stroke="#999" stroke-width="1.5"/></svg>
<svg class="a" style="left:812px;top:77.0px" width="20" height="20" viewBox="0 0 20 20"><rect x="4" y="6" width="12" height="3" fill="#aaa"/><path d="M2,16 Q6,10 10,14 Q14,18 18,12" fill="none" stroke="#999" stroke-width="1.5"/></svg>
<svg class="a" style="left:838px;top:77.0px" width="20" height="20" viewBox="0 0 20 20"><line x1="2" y1="4" x2="18" y2="4" stroke="#999" stroke-width="1.5"/><line x1="2" y1="10" x2="18" y2="10" stroke="#999" stroke-width="1.5"/><path d="M5,4 V10 M15,4 V10" stroke="#999"/><path d="M2,17 Q6,11 10,15 Q14,19 18,13" fill="none" stroke="#999" stroke-width="1.5"/></svg>
<svg class="a" style="left:864px;top:77.0px" width="20" height="20" viewBox="0 0 20 20"><line x1="2" y1="4" x2="18" y2="4" stroke="#999" stroke-width="1.5"/><line x1="2" y1="10" x2="18" y2="10" stroke="#999" stroke-width="1.5"/><path d="M5,4 V10 M15,4 V10" stroke="#999"/><path d="M2,17 Q6,11 10,15 Q14,19 18,13" fill="none" stroke="#999" stroke-width="1.5"/></svg>
<svg class="a" style="left:890px;top:77.0px" width="20" height="20" viewBox="0 0 20 20"><line x1="2" y1="16" x2="18" y2="4" stroke="#999" stroke-width="2"/><path d="M2,18 Q10,14 18,9" fill="none" stroke="#999" stroke-width="1.5"/></svg>
<svg class="a" style="left:916px;top:77.0px" width="20" height="20" viewBox="0 0 20 20"><polygon points="5,1 6,4 9,4 6.5,6 7.5,9 5,7 2.5,9 3.5,6 1,4 4,4" fill="#e8f040" stroke="#b0c020" stroke-width="0.5"/><rect x="10" y="2" width="9" height="7" fill="#f0f0f0" stroke="#404060"/><path d="M3,19 L17,12 L18,16 L5,19" fill="#7050c0"/></svg>
<div class="a" style="left:942px;top:76px;width:1px;height:22px;background:#d6d6d6"></div>
<svg class="a" style="left:948px;top:77.0px" width="20" height="20" viewBox="0 0 20 20"><polygon points="2,4 18,4 18,18 2,18" fill="#ddd" stroke="#aaa"/><polygon points="2,4 18,18 2,18" fill="#999"/><line x1="8" y1="8" x2="18" y2="3" stroke="#888" stroke-width="1.5"/></svg>
<svg class="a" style="left:973.5px;top:85px" width="9" height="5"><polygon points="0,0 9,0 4.5,5" fill="#8a8a8a"/></svg>
<div class="a" style="left:986px;top:76px;width:1px;height:22px;background:#d6d6d6"></div>
<svg class="a" style="left:989px;top:77px" width="3" height="20"><rect x="0.5" y="0.0" width="1.6" height="1.6" fill="#b8b8b8"/><rect x="0.5" y="3.3" width="1.6" height="1.6" fill="#b8b8b8"/><rect x="0.5" y="6.6" width="1.6" height="1.6" fill="#b8b8b8"/><rect x="0.5" y="9.899999999999999" width="1.6" height="1.6" fill="#b8b8b8"/><rect x="0.5" y="13.2" width="1.6" height="1.6" fill="#b8b8b8"/><rect x="0.5" y="16.5" width="1.6" height="1.6" fill="#b8b8b8"/></svg>
<div class="a" style="left:995px;top:76px;width:201px;height:22px;background:#e9ebee"></div>
<div class="a" style="left:1000px;top:80px;width:13px;height:14px;background:#d6f3f7"></div>
<div class="t" style="left:1017px;top:81px;font-size:12px;color:#1a1a1a;">1 - 全局 XYZ</div>
<svg class="a" style="left:1181px;top:84px" width="11" height="6"><polyline points="0.5,0.5 5.5,5 10.5,0.5" fill="none" stroke="#555" stroke-width="1.2"/></svg>
<svg class="a" style="left:1200px;top:77.0px" width="20" height="20" viewBox="0 0 20 20"><line x1="4" y1="17" x2="18" y2="17" stroke="#d03020" stroke-width="1.5"/><line x1="4" y1="17" x2="4" y2="6" stroke="#40a040" stroke-width="1.5"/><line x1="4" y1="17" x2="16" y2="10" stroke="#e0a020" stroke-width="1.5"/><rect x="9" y="1" width="10" height="7" fill="#f0f0f0" stroke="#404060"/></svg>
<div class="a" style="left:1226px;top:76px;width:1px;height:22px;background:#d6d6d6"></div>
<svg class="a" style="left:1232px;top:77.0px" width="20" height="20" viewBox="0 0 20 20"><g fill="#999"><rect x="1" y="3" width="18" height="1"/><rect x="1" y="7" width="18" height="1"/><rect x="1" y="11" width="18" height="1"/><rect x="1" y="15" width="18" height="1"/><rect x="1" y="18" width="18" height="1"/></g><g stroke="#999" stroke-dasharray="1,1"><line x1="4" y1="2" x2="4" y2="19"/><line x1="9" y1="2" x2="9" y2="19"/><line x1="14" y1="2" x2="14" y2="19"/></g><path d="M8,6 L12,3 L16,6" stroke="#a05050" fill="none"/></svg>
<svg class="a" style="left:1258px;top:77.0px" width="20" height="20" viewBox="0 0 20 20"><g fill="#999"><rect x="1" y="5" width="18" height="1"/><rect x="1" y="14" width="18" height="1"/></g><g stroke="#999" stroke-dasharray="1,1"><line x1="5" y1="1" x2="5" y2="19"/><line x1="15" y1="1" x2="15" y2="19"/></g><circle cx="10" cy="10" r="4" fill="#fff" stroke="#222" stroke-width="1.8"/><line x1="10" y1="1" x2="10" y2="19" stroke="#222" stroke-width="1.5"/><line x1="1" y1="10" x2="19" y2="10" stroke="#222" stroke-width="1.5"/></svg>
<div class="a" style="left:1282px;top:75px;width:26px;height:23px;background:#cde4f7;border:1px solid #a8d0f0"></div>
<svg class="a" style="left:1285px;top:77.0px" width="20" height="20" viewBox="0 0 20 20"><polygon points="3,10 10,3 17,10 10,17" fill="#a0b8d0" stroke="#445" stroke-width="1.2"/><line x1="10" y1="2" x2="10" y2="18" stroke="#333" stroke-width="1.5"/><line x1="2" y1="12" x2="18" y2="8" stroke="#333" stroke-width="1.5"/></svg>
<svg class="a" style="left:1310px;top:77.0px" width="20" height="20" viewBox="0 0 20 20"><polygon points="3,10 10,3 17,10 10,17" fill="#8098b0" stroke="#445" stroke-width="1.2"/><line x1="10" y1="2" x2="10" y2="18" stroke="#333" stroke-width="1.5"/><polygon points="10,5 16,8 10,11" fill="#c0d0e0"/></svg>
<svg class="a" style="left:1336px;top:77.0px" width="20" height="20" viewBox="0 0 20 20"><polygon points="3,10 10,3 17,10 10,17" fill="#a04060" stroke="#445" stroke-width="1.2"/><line x1="10" y1="2" x2="10" y2="18" stroke="#333" stroke-width="1.5"/><polygon points="10,5 16,8 10,11" fill="#d08090"/></svg>
<div class="a" style="left:1362px;top:76px;width:1px;height:22px;background:#d6d6d6"></div>
<svg class="a" style="left:1369px;top:77.0px" width="20" height="20" viewBox="0 0 20 20"><circle cx="6" cy="6" r="3" fill="none" stroke="#aaa" stroke-width="1.5"/><circle cx="14" cy="14" r="3" fill="none" stroke="#aaa" stroke-width="1.5"/><line x1="8" y1="8" x2="12" y2="12" stroke="#aaa" stroke-width="1.5"/></svg>
<svg class="a" style="left:1395px;top:77.0px" width="20" height="20" viewBox="0 0 20 20"><ellipse cx="10" cy="11" rx="8" ry="5" fill="none" stroke="#aaa" stroke-width="2"/><line x1="10" y1="1" x2="10" y2="19" stroke="#aaa" stroke-dasharray="2,1"/><polygon points="3,14 1,10 6,11" fill="#aaa"/></svg>
<svg class="a" style="left:1421px;top:77.0px" width="20" height="20" viewBox="0 0 20 20"><polygon points="2,18 8,3 8,18" fill="none" stroke="#aaa" stroke-width="1.3"/><polygon points="18,18 12,3 12,18" fill="none" stroke="#aaa" stroke-width="1.3"/><line x1="10" y1="1" x2="10" y2="19" stroke="#bbb" stroke-dasharray="2,1"/></svg>
<svg class="a" style="left:1447px;top:77.0px" width="20" height="20" viewBox="0 0 20 20"><line x1="2" y1="2" x2="18" y2="18" stroke="#d02020" stroke-width="2.2"/><line x1="18" y1="2" x2="2" y2="18" stroke="#d02020" stroke-width="2.2"/><circle cx="2" cy="2" r="1.8" fill="#802030"/><circle cx="18" cy="2" r="1.8" fill="#802030"/><circle cx="2" cy="18" r="1.8" fill="#802030"/><circle cx="18" cy="18" r="1.8" fill="#802030"/></svg>
<svg class="a" style="left:1472px;top:77.0px" width="20" height="20" viewBox="0 0 20 20"><rect x="1" y="3" width="18" height="15" rx="2" fill="#f4f4f4" stroke="#555" stroke-width="1.3"/><rect x="1" y="3" width="18" height="3" fill="#777"/><circle cx="10" cy="12" r="3.5" fill="none" stroke="#333" stroke-width="2.5" stroke-dasharray="1.5,1"/><circle cx="10" cy="12" r="1.2" fill="#333"/></svg>
<div class="a" style="left:1498px;top:76px;width:1px;height:22px;background:#d6d6d6"></div>
<svg class="a" style="left:1501px;top:77px" width="3" height="20"><rect x="0.5" y="0.0" width="1.6" height="1.6" fill="#b8b8b8"/><rect x="0.5" y="3.3" width="1.6" height="1.6" fill="#b8b8b8"/><rect x="0.5" y="6.6" width="1.6" height="1.6" fill="#b8b8b8"/><rect x="0.5" y="9.899999999999999" width="1.6" height="1.6" fill="#b8b8b8"/><rect x="0.5" y="13.2" width="1.6" height="1.6" fill="#b8b8b8"/><rect x="0.5" y="16.5" width="1.6" height="1.6" fill="#b8b8b8"/></svg>
<svg class="a" style="left:1510px;top:77.0px" width="20" height="20" viewBox="0 0 20 20"><rect x="1" y="2" width="18" height="17" fill="#3a8a3a" stroke="#2a4a6a" stroke-width="1.5"/><rect x="1" y="2" width="18" height="3" fill="#2a4a6a"/><polygon points="3,17 17,6 17,17" fill="#90e090"/><g stroke="#c0f0c0" stroke-width="0.6"><line x1="3" y1="9" x2="17" y2="9"/><line x1="3" y1="13" x2="17" y2="13"/></g></svg>
<svg class="a" style="left:1534.5px;top:85px" width="9" height="5"><polygon points="0,0 9,0 4.5,5" fill="#1a1a1a"/></svg>
<svg class="a" style="left:1548px;top:77.0px" width="20" height="20" viewBox="0 0 20 20"><line x1="2" y1="18" x2="14" y2="3" stroke="#9a7aa8" stroke-width="2.5"/><circle cx="2" cy="18" r="1.8" fill="#802030"/><circle cx="14" cy="3" r="1.8" fill="#802030"/><text x="12" y="19" font-size="8" font-weight="bold" fill="#333">I</text></svg>
<svg class="a" style="left:1571.5px;top:85px" width="9" height="5"><polygon points="0,0 9,0 4.5,5" fill="#1a1a1a"/></svg>
<div class="a" style="left:0px;top:101px;width:217px;height:905px;background:#fcfcfc;border-right:1px solid #c4c4c4"></div>
<div class="a" style="left:0px;top:102px;width:216px;height:21px;background:#dbe5ef"></div>
<div class="a" style="left:0px;top:123px;width:216px;height:1px;background:#bcc6d0"></div>
<div class="a" style="left:199px;top:124px;width:16px;height:856px;background:#f1f1f1"></div>
<div class="t" style="left:3px;top:147px;font-size:12px;color:#1a1a1a;"><b>frame design.rf6*</b></div>
<div class="t" style="left:1px;top:201px;font-size:12px;color:#1a1a1a;letter-spacing:-0.35px">55 | 各向同性|线弹性</div>
<div class="t" style="left:0px;top:219px;font-size:12px;color:#1a1a1a;letter-spacing:-0.35px">0 | 各向同性|线弹性</div>
<div class="t" style="left:0px;top:254px;font-size:12px;color:#1a1a1a;letter-spacing:-0.35px">H HW 300x300 | 1 - Q355 | 立柱</div>
<div class="t" style="left:0px;top:272px;font-size:12px;color:#1a1a1a;letter-spacing:-0.35px">H HN 400x200 | 1 - Q355 | 钢梁</div>
<div class="t" style="left:-5px;top:307px;font-size:12px;color:#1a1a1a;letter-spacing:-0.35px">匀 | d : 120.0 mm | 2 - C30</div>
<div class="t" style="left:-8px;top:615px;font-size:12px;color:#1a1a1a;letter-spacing:-0.35px">性</div>
<div class="t" style="left:-8px;top:633px;font-size:12px;color:#1a1a1a;letter-spacing:-0.35px">设置</div>
<div class="t" style="left:-8px;top:651px;font-size:12px;color:#1a1a1a;letter-spacing:-0.35px">参数设置</div>
<div class="t" style="left:-8px;top:687px;font-size:12px;color:#1a1a1a;letter-spacing:-0.35px">组合</div>
<div class="t" style="left:2px;top:813px;font-size:12px;color:#1a1a1a;letter-spacing:-0.35px">设置</div>
<div class="t" style="left:2px;top:831px;font-size:12px;color:#1a1a1a;letter-spacing:-0.35px">设置</div>
<div class="t" style="left:2px;top:849px;font-size:12px;color:#1a1a1a;letter-spacing:-0.35px">析设置</div>
<div class="t" style="left:2px;top:885px;font-size:12px;color:#1a1a1a;letter-spacing:-0.35px">之间的关系</div>
<div class="t" style="left:-5px;top:939px;font-size:12px;color:#1a1a1a;letter-spacing:-0.35px">重</div>
<div class="t" style="left:-5px;top:957px;font-size:12px;color:#1a1a1a;letter-spacing:-0.35px">面活荷载</div>
<div class="t" style="left:-11px;top:975px;font-size:12px;color:#1a1a1a;letter-spacing:-0.35px">横向风荷载</div>
<div class="a" style="left:206px;top:142px;width:2.5px;height:518px;background:#5a5a5a"></div>
<div class="a" style="left:0px;top:980px;width:216px;height:26px;background:#f3f3f3;border-top:1px solid #d4d4d4;border-bottom:1px solid #d4d4d4"></div>
<div class="a" style="left:218px;top:101px;width:1433px;height:588px;background:#fdfdfd"></div>
<svg class="a" style="left:0;top:0" width="1651" height="1032"><g stroke="#a0a0a0" stroke-width="1" fill="none"><line x1="893" y1="180" x2="893" y2="256"/><line x1="893" y1="282" x2="893" y2="434"/><line x1="893" y1="460" x2="893" y2="535"/><line x1="850" y1="214" x2="896" y2="177"/><line x1="856" y1="386" x2="896" y2="357"/><line x1="858" y1="566" x2="894" y2="536"/><line x1="567" y1="639" x2="636" y2="648"/><line x1="678" y1="654" x2="743" y2="662"/><line x1="596" y1="615" x2="566" y2="640"/><line x1="773" y1="637" x2="743" y2="663"/><line x1="863" y1="641" x2="884" y2="623"/><line x1="908" y1="603" x2="933" y2="583"/><line x1="797" y1="633" x2="866" y2="641"/><line x1="866" y1="574" x2="934" y2="583"/></g><g fill="#a0a0a0"><polygon points="893,180 889.5,190 896.5,190"/><polygon points="893,355 889.5,345 896.5,345"/><polygon points="893,359 889.5,369 896.5,369"/><polygon points="893,535 889.5,525 896.5,525"/><polygon points="567,639 577,637 576,643"/><polygon points="743,662 733,664 734,658"/><polygon points="863,641 868,632 871,636"/><polygon points="933,583 928,592 925,588"/></g><text x="0" y="0" transform="translate(897,269) rotate(-90)" font-size="11" fill="#8a8a8a" text-anchor="middle">3.000</text><text x="0" y="0" transform="translate(897,447) rotate(-90)" font-size="11" fill="#8a8a8a" text-anchor="middle">3.000</text><text x="0" y="0" transform="translate(657,655) rotate(8)" font-size="11" fill="#8a8a8a" text-anchor="middle">3.000</text><text x="0" y="0" transform="translate(900,616) rotate(-40)" font-size="11" fill="#8a8a8a" text-anchor="middle">3.000</text><polygon points="653.0,556.0 666.0,545.0 695.0,548.0 682.0,559.0" fill="#62e05e"/><polygon points="829.0,578.0 842.0,567.0 871.0,570.0 858.0,581.0" fill="#62e05e"/><rect x="661" y="191" width="24" height="361.0" fill="#c255d2"/><rect x="661" y="191" width="5" height="361.0" fill="#ae64be"/><rect x="666" y="191" width="3" height="361.0" fill="#a43cb6"/><rect x="669" y="191" width="9" height="361.0" fill="#ca5ad8"/><rect x="678" y="191" width="3" height="361.0" fill="#a63ab8"/><rect x="681" y="191" width="4" height="361.0" fill="#bb55cc"/><rect x="837" y="213" width="24" height="361.0" fill="#c255d2"/><rect x="837" y="213" width="5" height="361.0" fill="#ae64be"/><rect x="842" y="213" width="3" height="361.0" fill="#a43cb6"/><rect x="845" y="213" width="9" height="361.0" fill="#ca5ad8"/><rect x="854" y="213" width="3" height="361.0" fill="#a63ab8"/><rect x="857" y="213" width="4" height="361.0" fill="#bb55cc"/><polygon points="605.0,430.5 673.0,373.5 849.0,395.5 849.0,404.5 781.0,463.5 605.0,439.5" fill="#5ed2ca" opacity="0.8"/><polygon points="673.0,373.5 849.0,395.5 849.0,420.5 673.0,398.5" fill="#6ab474" opacity="0.78"/><polygon points="605.0,430.5 673.0,373.5 673.0,398.5 605.0,455.5" fill="#6ab474" opacity="0.78"/><polyline points="608.0,455.5 676.0,398.5 846.0,420.5" fill="none" stroke="#8fd8c8" stroke-width="3" opacity="0.7"/><polygon points="605.0,430.5 673.0,373.5 849.0,395.5 847.0,401.5 677.0,379.5 611.0,435.5" fill="#6cd0c4" opacity="0.75"/><polygon points="605.0,432.5 781.0,456.5 849.0,397.5 849.0,404.5 781.0,463.5 605.0,439.5" fill="#a8dcc0" opacity="0.75"/><polygon points="605.0,438.5 781.0,462.5 781.0,486.5 605.0,462.5" fill="#d4b43c" opacity="0.88"/><polygon points="605.0,459.5 781.0,483.5 781.0,487.5 605.0,463.5" fill="#b09830" opacity="0.8"/><polygon points="781.0,462.5 849.0,403.5 849.0,427.5 781.0,486.5" fill="#c4a634" opacity="0.88"/><polygon points="787.0,468.5 845.0,409.5 845.0,415.5 787.0,474.5" fill="#a89030" opacity="0.5"/><polygon points="605.0,252.0 673.0,195.0 849.0,217.0 849.0,226.0 781.0,285.0 605.0,261.0" fill="#5ed2ca" opacity="0.8"/><polygon points="673.0,195.0 849.0,217.0 849.0,242.0 673.0,220.0" fill="#6ab474" opacity="0.78"/><polygon points="605.0,252.0 673.0,195.0 673.0,220.0 605.0,277.0" fill="#6ab474" opacity="0.78"/><polyline points="608.0,277.0 676.0,220.0 846.0,242.0" fill="none" stroke="#8fd8c8" stroke-width="3" opacity="0.7"/><polygon points="605.0,252.0 673.0,195.0 849.0,217.0 847.0,223.0 677.0,201.0 611.0,257.0" fill="#6cd0c4" opacity="0.75"/><polygon points="605.0,254.0 781.0,278.0 849.0,219.0 849.0,226.0 781.0,285.0 605.0,261.0" fill="#a8dcc0" opacity="0.75"/><polygon points="605.0,260.0 781.0,284.0 781.0,308.0 605.0,284.0" fill="#d4b43c" opacity="0.88"/><polygon points="605.0,281.0 781.0,305.0 781.0,309.0 605.0,285.0" fill="#b09830" opacity="0.8"/><polygon points="781.0,284.0 849.0,225.0 849.0,249.0 781.0,308.0" fill="#c4a634" opacity="0.88"/><polygon points="787.0,290.0 845.0,231.0 845.0,237.0 787.0,296.0" fill="#a89030" opacity="0.5"/><polygon points="585.0,613.0 598.0,602.0 627.0,605.0 614.0,616.0" fill="#62e05e"/><polygon points="761.0,637.0 774.0,626.0 803.0,629.0 790.0,640.0" fill="#62e05e"/><rect x="593" y="248" width="24" height="361.0" fill="#c255d2"/><rect x="593" y="248" width="5" height="361.0" fill="#ae64be"/><rect x="598" y="248" width="3" height="361.0" fill="#a43cb6"/><rect x="601" y="248" width="9" height="361.0" fill="#ca5ad8"/><rect x="610" y="248" width="3" height="361.0" fill="#a63ab8"/><rect x="613" y="248" width="4" height="361.0" fill="#bb55cc"/><rect x="769" y="272" width="24" height="361.0" fill="#c255d2"/><rect x="769" y="272" width="5" height="361.0" fill="#ae64be"/><rect x="774" y="272" width="3" height="361.0" fill="#a43cb6"/><rect x="777" y="272" width="9" height="361.0" fill="#ca5ad8"/><rect x="786" y="272" width="3" height="361.0" fill="#a63ab8"/><rect x="789" y="272" width="4" height="361.0" fill="#bb55cc"/><circle cx="604" cy="252" r="2" fill="#b0203a"/><circle cx="672" cy="195" r="2" fill="#b0203a"/><circle cx="780" cy="276" r="2" fill="#b0203a"/><circle cx="848" cy="217" r="2" fill="#b0203a"/><circle cx="604" cy="430.5" r="2" fill="#b0203a"/><circle cx="672" cy="373.5" r="2" fill="#b0203a"/><circle cx="780" cy="454.5" r="2" fill="#b0203a"/><circle cx="848" cy="395.5" r="2" fill="#b0203a"/><line x1="604" y1="602" x2="604" y2="578" stroke="#20106a" stroke-width="2"/><polygon points="604,572 600,582 608,582" fill="#20106a"/><line x1="606" y1="608" x2="635" y2="612" stroke="#6a1010" stroke-width="2"/><polygon points="641,613 631,608 631,616" fill="#c02020"/><line x1="606" y1="606" x2="617" y2="597" stroke="#50c040" stroke-width="3"/><circle cx="605" cy="607" r="3" fill="#e0d060"/><text x="601" y="566" font-size="10" fill="#20106a">Z</text><text x="620" y="597" font-size="9" fill="#70b060">Y</text><text x="648" y="618" font-size="10" fill="#c02020">X</text></svg>
<div class="t" style="left:617px;top:214px;font-size:10.5px;font-weight:bold;letter-spacing:0.4px;color:#1e1e1e;background:rgba(240,240,220,0.55);padding:1px 1px">H HN 400x200</div>
<div class="t" style="left:764px;top:214px;font-size:10.5px;font-weight:bold;letter-spacing:0.4px;color:#1e1e1e;background:rgba(240,240,220,0.55);padding:1px 1px">H HN 400x200</div>
<div class="t" style="left:635px;top:224px;font-size:10.5px;font-weight:bold;letter-spacing:0.4px;color:#1e1e1e;background:rgba(240,240,220,0.55);padding:1px 1px">H HW 300x300</div>
<div class="t" style="left:793px;top:237px;font-size:10.5px;font-weight:bold;letter-spacing:0.4px;color:#1e1e1e;background:rgba(240,240,220,0.55);padding:1px 1px">H HN 400x200</div>
<div class="t" style="left:811px;top:247px;font-size:10.5px;font-weight:bold;letter-spacing:0.4px;color:#1e1e1e;background:rgba(240,240,220,0.55);padding:1px 1px">H HW 300x300</div>
<div class="t" style="left:695px;top:273px;font-size:10.5px;font-weight:bold;letter-spacing:0.4px;color:#1e1e1e;background:rgba(240,240,220,0.55);padding:1px 1px">H HN 400x200</div>
<div class="t" style="left:567px;top:282px;font-size:10.5px;font-weight:bold;letter-spacing:0.4px;color:#1e1e1e;background:rgba(240,240,220,0.55);padding:1px 1px">H HW 300x300</div>
<div class="t" style="left:743px;top:305px;font-size:10.5px;font-weight:bold;letter-spacing:0.4px;color:#1e1e1e;background:rgba(240,240,220,0.55);padding:1px 1px">H HW 300x300</div>
<div class="t" style="left:617px;top:392px;font-size:10.5px;font-weight:bold;letter-spacing:0.4px;color:#1e1e1e;background:rgba(240,240,220,0.55);padding:1px 1px">H HN 400x200</div>
<div class="t" style="left:764px;top:392px;font-size:10.5px;font-weight:bold;letter-spacing:0.4px;color:#1e1e1e;background:rgba(240,240,220,0.55);padding:1px 1px">H HN 400x200</div>
<div class="t" style="left:635px;top:402px;font-size:10.5px;font-weight:bold;letter-spacing:0.4px;color:#1e1e1e;background:rgba(240,240,220,0.55);padding:1px 1px">H HW 300x300</div>
<div class="t" style="left:793px;top:415px;font-size:10.5px;font-weight:bold;letter-spacing:0.4px;color:#1e1e1e;background:rgba(240,240,220,0.55);padding:1px 1px">H HN 400x200</div>
<div class="t" style="left:811px;top:425px;font-size:10.5px;font-weight:bold;letter-spacing:0.4px;color:#1e1e1e;background:rgba(240,240,220,0.55);padding:1px 1px">H HW 300x300</div>
<div class="t" style="left:695px;top:451px;font-size:10.5px;font-weight:bold;letter-spacing:0.4px;color:#1e1e1e;background:rgba(240,240,220,0.55);padding:1px 1px">H HN 400x200</div>
<div class="t" style="left:567px;top:460px;font-size:10.5px;font-weight:bold;letter-spacing:0.4px;color:#1e1e1e;background:rgba(240,240,220,0.55);padding:1px 1px">H HW 300x300</div>
<div class="t" style="left:743px;top:483px;font-size:10.5px;font-weight:bold;letter-spacing:0.4px;color:#1e1e1e;background:rgba(240,240,220,0.55);padding:1px 1px">H HW 300x300</div>
<svg class="a" style="left:0;top:0" width="1651" height="1032"><circle cx="555" cy="478" r="36" fill="#f8f090" opacity="0.88"/><path d="M551,484 L549,476 Q549,473 551,474 L552,478 L552,471 Q553,469 554,471 L555,477 L556,470 Q557,468 558,470 L558,477 L559,472 Q561,471 561,473 L561,482 Q560,487 556,487 Z" fill="#fff" stroke="#222" stroke-width="1"/></svg>
<svg class="a" style="left:0;top:0" width="1651" height="1032"><polygon points="1409.5,145.6 1435,122.8 1498.6,131 1473,151" fill="#8c8c8c" stroke="#6a6a6a" stroke-width="1"/><polygon points="1473,151 1498.6,131 1498.6,194.6 1473,215.8" fill="#9c9c9c" stroke="#6a6a6a" stroke-width="1"/><polygon points="1409.5,145.6 1473,151 1473,215.8 1409.5,208" fill="#dadada" stroke="#6a6a6a" stroke-width="1"/><g stroke="#6e6e6e" stroke-width="2"><line x1="1424.5" y1="147" x2="1424.5" y2="210"/><line x1="1457" y1="150" x2="1457" y2="213"/><line x1="1409.5" y1="162" x2="1473" y2="167"/><line x1="1409.5" y1="193" x2="1473" y2="199"/></g><g stroke="#777" stroke-width="2"><line x1="1480" y1="146" x2="1480" y2="210"/><line x1="1492" y1="136" x2="1492" y2="200"/><line x1="1473" y1="167" x2="1498.6" y2="146"/><line x1="1473" y1="199" x2="1498.6" y2="178"/><line x1="1425" y1="132" x2="1490" y2="139"/><line x1="1418" y1="139" x2="1483" y2="145"/><line x1="1448" y1="124" x2="1424" y2="147"/><line x1="1475" y1="128" x2="1457" y2="150"/></g><text x="1430" y="186" font-size="11" font-weight="bold" fill="#4cbf4c">+Y</text><text x="1483" y="180" font-size="9" font-weight="bold" fill="#c05070">X</text><rect x="1451" y="133" width="9" height="3" fill="#6a6a9a"/></svg>
<svg class="a" style="left:0;top:0" width="1651" height="1032"><line x1="280" y1="627" x2="280" y2="597" stroke="#12105a" stroke-width="3"/><polygon points="280,589 276,600 284,600" fill="#12105a"/><line x1="281" y1="628" x2="309" y2="631" stroke="#901818" stroke-width="3"/><polygon points="317,631 307,626 308,636" fill="#c82020"/><line x1="282" y1="625" x2="292" y2="616" stroke="#40c040" stroke-width="4" stroke-linecap="round"/><circle cx="280" cy="627" r="3.5" fill="#d8c040"/><text x="276" y="584" font-size="10" fill="#111">Z</text><text x="296" y="616" font-size="9" fill="#5a9a7a">Y</text><text x="323" y="637" font-size="10" fill="#3a1a2a">X</text></svg>
<div class="a" style="left:1526px;top:102px;width:125px;height:194px;background:#f7f7f7;border-left:1px solid #d4d4d4"></div>
<div class="a" style="left:1527px;top:102px;width:124px;height:21px;background:#dde6ef"></div>
<div class="t" style="left:1532px;top:107px;font-size:12px;color:#222;"><b>控制面板</b></div>
<div class="a" style="left:1527px;top:123px;width:124px;height:31px;background:#fdfdfd;border-top:1px solid #cfd6de"></div>
<div class="t" style="left:1537px;top:131px;font-size:12px;color:#1a1a1a;">渲染对象的颜色</div>
<div class="a" style="left:1527px;top:154px;width:14px;height:142px;background:#dcdcdc"></div>
<div class="a" style="left:1541px;top:154px;width:110px;height:33px;background:#e9e9e9"></div>
<div class="a" style="left:1541px;top:187px;width:110px;height:16px;background:#e9e9e9"></div>
<div class="a" style="left:1541px;top:251px;width:110px;height:16px;background:#e9e9e9"></div>
<div class="a" style="left:1541px;top:203px;width:110px;height:48px;background:#fafafa"></div>
<div class="a" style="left:1541px;top:267px;width:110px;height:29px;background:#fafafa"></div>
<div class="t" style="left:1542px;top:157px;font-size:12px;color:#1a1a1a;">节点 | 显示属性</div>
<div class="t" style="left:1542px;top:172px;font-size:12px;color:#1a1a1a;">线 | 显示属性</div>
<div class="t" style="left:1542px;top:189px;font-size:12px;color:#1a1a1a;">杆件 | 截面</div>
<div class="t" style="left:1542px;top:253px;font-size:12px;color:#1a1a1a;">面 | 材料</div>
<div class="a" style="left:1530px;top:191px;width:9px;height:9px;border:1px solid #666;background:#fff"></div>
<div class="a" style="left:1532px;top:195px;width:5px;height:1px;background:#444"></div>
<div class="a" style="left:1530px;top:255px;width:9px;height:9px;border:1px solid #666;background:#fff"></div>
<div class="a" style="left:1532px;top:259px;width:5px;height:1px;background:#444"></div>
<div class="a" style="left:1552px;top:205px;width:11px;height:11px;background:#d648d6"></div>
<div class="a" style="left:1552px;top:221px;width:11px;height:11px;background:#e0b820"></div>
<div class="a" style="left:1552px;top:269px;width:11px;height:11px;background:#30e8e8"></div>
<div class="t" style="left:1568px;top:204px;font-size:12px;color:#1a1a1a;">1 - H HW 300x300</div>
<div class="t" style="left:1568px;top:220px;font-size:12px;color:#1a1a1a;">2 - H HN 400x200</div>
<div class="t" style="left:1568px;top:268px;font-size:12px;color:#1a1a1a;">2 - C30</div>
<div class="a" style="left:1113px;top:304px;width:560px;height:313px;background:#fdfdfd;border:1px solid #3a3a3a"></div>
<div class="a" style="left:1430px;top:304px;width:1px;height:313px;background:#3a3a3a"></div>
<div class="t" style="left:1122px;top:307px;font-size:18px;color:#505050;font-family:'Liberation Serif',serif;line-height:18px">钢号</div>
<div class="t" style="left:1439px;top:307px;font-size:18px;color:#404040;font-family:'Liberation Serif',serif;line-height:18px">Q355</div>
<div class="a" style="left:1113px;top:330px;width:560px;height:1px;background:#3a3a3a"></div>
<div class="t" style="left:1122px;top:333px;font-size:18px;color:#505050;font-family:'Liberation Serif',serif;line-height:18px">参考规范</div>
<div class="t" style="left:1439px;top:333px;font-size:18px;color:#404040;font-family:'Liberation Serif',serif;line-height:18px">钢结构设计规范 GB50017-2017</div>
<div class="a" style="left:1113px;top:356px;width:560px;height:1px;background:#3a3a3a"></div>
<div class="t" style="left:1122px;top:359px;font-size:18px;color:#505050;font-family:'Liberation Serif',serif;line-height:18px">钢梁</div>
<div class="t" style="left:1439px;top:359px;font-size:18px;color:#404040;font-family:'Liberation Serif',serif;line-height:18px">HN400x200</div>
<div class="a" style="left:1113px;top:382px;width:560px;height:1px;background:#3a3a3a"></div>
<div class="t" style="left:1122px;top:385px;font-size:18px;color:#505050;font-family:'Liberation Serif',serif;line-height:18px">立柱</div>
<div class="t" style="left:1439px;top:385px;font-size:18px;color:#404040;font-family:'Liberation Serif',serif;line-height:18px">HW300x300</div>
<div class="a" style="left:1113px;top:408px;width:560px;height:1px;background:#3a3a3a"></div>
<div class="t" style="left:1122px;top:411px;font-size:18px;color:#505050;font-family:'Liberation Serif',serif;line-height:18px">抗震设防烈度</div>
<div class="t" style="left:1439px;top:411px;font-size:18px;color:#404040;font-family:'Liberation Serif',serif;line-height:18px">7 度，第二组</div>
<div class="a" style="left:1113px;top:434px;width:560px;height:1px;background:#3a3a3a"></div>
<div class="t" style="left:1122px;top:437px;font-size:18px;color:#505050;font-family:'Liberation Serif',serif;line-height:18px">场地类别</div>
<div class="t" style="left:1439px;top:437px;font-size:18px;color:#404040;font-family:'Liberation Serif',serif;line-height:18px">IV 类</div>
<div class="a" style="left:1113px;top:460px;width:560px;height:1px;background:#3a3a3a"></div>
<div class="t" style="left:1122px;top:463px;font-size:18px;color:#505050;font-family:'Liberation Serif',serif;line-height:18px">场地特征周期</div>
<div class="t" style="left:1439px;top:463px;font-size:18px;color:#404040;font-family:'Liberation Serif',serif;line-height:18px">0.90s</div>
<div class="a" style="left:1113px;top:486px;width:560px;height:1px;background:#3a3a3a"></div>
<div class="t" style="left:1122px;top:489px;font-size:18px;color:#505050;font-family:'Liberation Serif',serif;line-height:18px">基本风压</div>
<div class="t" style="left:1439px;top:489px;font-size:18px;color:#404040;font-family:'Liberation Serif',serif;line-height:18px">0.55kN/m<span class=sp>2</span></div>
<div class="a" style="left:1113px;top:512px;width:560px;height:1px;background:#3a3a3a"></div>
<div class="t" style="left:1122px;top:515px;font-size:18px;color:#505050;font-family:'Liberation Serif',serif;line-height:18px">场地类别</div>
<div class="t" style="left:1439px;top:515px;font-size:18px;color:#404040;font-family:'Liberation Serif',serif;line-height:18px">B 类</div>
<div class="a" style="left:1113px;top:538px;width:560px;height:1px;background:#3a3a3a"></div>
<div class="t" style="left:1122px;top:541px;font-size:18px;color:#505050;font-family:'Liberation Serif',serif;line-height:18px">楼板厚度</div>
<div class="t" style="left:1439px;top:541px;font-size:18px;color:#404040;font-family:'Liberation Serif',serif;line-height:18px">120mm，C30 混凝土</div>
<div class="a" style="left:1113px;top:564px;width:560px;height:1px;background:#3a3a3a"></div>
<div class="t" style="left:1122px;top:567px;font-size:18px;color:#505050;font-family:'Liberation Serif',serif;line-height:18px">楼面附加恒荷载</div>
<div class="t" style="left:1439px;top:567px;font-size:18px;color:#404040;font-family:'Liberation Serif',serif;line-height:18px">2 kN/m<span class=sp>2</span></div>
<div class="a" style="left:1113px;top:590px;width:560px;height:1px;background:#3a3a3a"></div>
<div class="t" style="left:1122px;top:593px;font-size:18px;color:#505050;font-family:'Liberation Serif',serif;line-height:18px">楼面均布活荷载</div>
<div class="t" style="left:1439px;top:593px;font-size:18px;color:#404040;font-family:'Liberation Serif',serif;line-height:18px">2 kN/m<span class=sp>2</span></div>
<div class="t" style="left:1448px;top:667px;font-size:12px;color:#1a1a1a;">尺寸标注 [m]</div>
<div class="a" style="left:1565px;top:660px;width:86px;height:29px;background:#f0f0f0;border-left:1px solid #d4d4d4;border-top:1px solid #d4d4d4"></div>
<div class="a" style="left:1526px;top:620px;width:40px;height:66px;background:#fdfdfd;border-left:1px solid #d0d0d0;border-bottom:1px solid #d0d0d0;border-right:1px solid #d8d8d8;border-right-color:transparent"></div>
<div class="a" style="left:1529px;top:622px;width:12px;height:3px;background:#c8c8c8"></div>
<svg class="a" style="left:1538px;top:666px" width="16" height="16"><rect x="0" y="1" width="3" height="3" fill="#6080c0"/><rect x="0" y="6" width="3" height="3" fill="#e0b020"/><rect x="0" y="11" width="3" height="3" fill="#60a060"/><rect x="5" y="2" width="9" height="1.5" fill="#555"/><rect x="5" y="7" width="9" height="1.5" fill="#555"/><rect x="5" y="12" width="9" height="1.5" fill="#555"/></svg>
<div class="a" style="left:218px;top:689px;width:1433px;height:316px;background:#f3f3f3"></div>
<div class="a" style="left:217px;top:689px;width:4px;height:317px;background:#f6f6f6"></div>
<div class="a" style="left:221px;top:690px;width:1430px;height:22px;background:#dde6f0"></div>
<div class="t" style="left:227px;top:695px;font-size:12px;color:#222;"><b>材料</b></div>
<div class="t" style="left:229px;top:717px;font-size:12px;color:#1a1a1a;">转到</div>
<div class="t" style="left:269px;top:717px;font-size:12px;color:#1a1a1a;">编辑</div>
<div class="t" style="left:309px;top:717px;font-size:12px;color:#1a1a1a;">选择</div>
<div class="t" style="left:349px;top:717px;font-size:12px;color:#1a1a1a;">视图</div>
<div class="t" style="left:389px;top:717px;font-size:12px;color:#1a1a1a;">设置</div>
<div class="a" style="left:224px;top:737px;width:196px;height:22px;background:#e9ebee"></div>
<div class="a" style="left:421px;top:737px;width:38px;height:22px;background:#e4e6ea"></div>
<div class="a" style="left:421px;top:737px;width:18px;height:22px;background:#d6d6d6"></div>
<div class="a" style="left:466px;top:737px;width:270px;height:22px;background:#e9ebee"></div>
<div class="a" style="left:737px;top:737px;width:34px;height:22px;background:#e4e6ea"></div>
<div class="a" style="left:737px;top:737px;width:16px;height:22px;background:#d6d6d6"></div>
<svg class="a" style="left:229px;top:740px" width="16" height="16"><rect x="0.5" y="0.5" width="14" height="14" fill="#5a8a6a" stroke="#4a5a6a"/><rect x="3" y="3" width="9" height="9" fill="#8fd08f"/></svg>
<div class="t" style="left:248px;top:743px;font-size:12px;color:#1a1a1a;">结构</div>
<div class="t" style="left:489px;top:743px;font-size:12px;color:#1a1a1a;">基本对象</div>
<svg class="a" style="left:470px;top:740px" width="16" height="16"><line x1="2" y1="14" x2="12" y2="2" stroke="#9070a0" stroke-width="2"/><circle cx="2" cy="14" r="2" fill="#a03040"/><circle cx="12" cy="2" r="2" fill="#a03040"/><text x="9" y="15" font-size="7" fill="#333">I</text></svg>
<svg class="a" style="left:407px;top:745px" width="10" height="6"><polyline points="0,0 5,5 10,0" fill="none" stroke="#555" stroke-width="1.2"/></svg>
<svg class="a" style="left:722px;top:745px" width="10" height="6"><polyline points="0,0 5,5 10,0" fill="none" stroke="#555" stroke-width="1.2"/></svg>
<svg class="a" style="left:428px;top:744px" width="6" height="8"><polygon points="5,0 0,4 5,8" fill="#666"/></svg>
<svg class="a" style="left:743px;top:744px" width="6" height="8"><polygon points="5,0 0,4 5,8" fill="#666"/></svg>
<svg class="a" style="left:445px;top:744px" width="6" height="8"><polygon points="0,0 5,4 0,8" fill="#111"/></svg>
<svg class="a" style="left:759px;top:744px" width="6" height="8"><polygon points="0,0 5,4 0,8" fill="#111"/></svg>
<div class="a" style="left:463px;top:738px;width:1px;height:20px;background:#d0d0d0"></div>
<div class="a" style="left:221px;top:763px;width:1430px;height:218px;background:#fdfdfd"></div>
<div class="a" style="left:221px;top:763px;width:1430px;height:10px;background:#dcdcdc"></div>
<div class="a" style="left:221px;top:773px;width:1430px;height:32px;background:#ececec"></div>
<div class="a" style="left:221px;top:763px;width:61px;height:218px;background:#dedede"></div>
<div class="a" style="left:1071px;top:805px;width:100px;height:176px;background:#f3f6ee"></div>
<div class="a" style="left:1556px;top:805px;width:95px;height:176px;background:#f4f7ef"></div>
<div class="a" style="left:871px;top:805px;width:600px;height:32px;background:#f6f9f2"></div>
<div class="a" style="left:282px;top:763px;width:1px;height:218px;background:#d4d4d4"></div>
<div class="a" style="left:531px;top:763px;width:1px;height:218px;background:#d4d4d4"></div>
<div class="a" style="left:671px;top:763px;width:1px;height:218px;background:#d4d4d4"></div>
<div class="a" style="left:871px;top:763px;width:1px;height:218px;background:#d4d4d4"></div>
<div class="a" style="left:971px;top:763px;width:1px;height:218px;background:#d4d4d4"></div>
<div class="a" style="left:1071px;top:763px;width:1px;height:218px;background:#d4d4d4"></div>
<div class="a" style="left:1171px;top:763px;width:1px;height:218px;background:#d4d4d4"></div>
<div class="a" style="left:1271px;top:763px;width:1px;height:218px;background:#d4d4d4"></div>
<div class="a" style="left:1371px;top:763px;width:1px;height:218px;background:#d4d4d4"></div>
<div class="a" style="left:1471px;top:763px;width:1px;height:218px;background:#d4d4d4"></div>
<div class="a" style="left:1556px;top:763px;width:1px;height:218px;background:#d4d4d4"></div>
<div class="a" style="left:221px;top:805px;width:1430px;height:1px;background:#d0d0d0"></div>
<div class="a" style="left:221px;top:821px;width:1430px;height:1px;background:#e0e0e0"></div>
<div class="a" style="left:221px;top:837px;width:1430px;height:1px;background:#e0e0e0"></div>
<div class="a" style="left:221px;top:853px;width:1430px;height:1px;background:#e0e0e0"></div>
<div class="a" style="left:221px;top:869px;width:1430px;height:1px;background:#e0e0e0"></div>
<div class="a" style="left:221px;top:885px;width:1430px;height:1px;background:#e0e0e0"></div>
<div class="a" style="left:221px;top:901px;width:1430px;height:1px;background:#e0e0e0"></div>
<div class="a" style="left:221px;top:917px;width:1430px;height:1px;background:#e0e0e0"></div>
<div class="a" style="left:221px;top:933px;width:1430px;height:1px;background:#e0e0e0"></div>
<div class="a" style="left:221px;top:949px;width:1430px;height:1px;background:#e0e0e0"></div>
<div class="a" style="left:221px;top:965px;width:1430px;height:1px;background:#e0e0e0"></div>
<div class="a" style="left:221px;top:981px;width:1430px;height:1px;background:#e0e0e0"></div>
<div class="a" style="left:221px;top:980px;width:1430px;height:1px;background:#c8c8c8"></div>
<div class="t" style="left:228px;top:785px;font-size:12px;color:#1a1a1a;">材料编号</div>
<div class="t" style="left:383px;top:791px;font-size:12px;color:#1a1a1a;">材料名称</div>
<div class="t" style="left:589px;top:776px;font-size:12px;color:#1a1a1a;">材料</div>
<div class="t" style="left:589px;top:791px;font-size:12px;color:#1a1a1a;">类型</div>
<div class="t" style="left:748px;top:791px;font-size:12px;color:#1a1a1a;">材料模型</div>
<div class="t" style="left:871px;width:100px;text-align:center;top:776px;font-size:12px">弹性模量</div>
<div class="t" style="left:871px;width:100px;text-align:center;top:791px;font-size:12px">E [N/mm²]</div>
<div class="t" style="left:971px;width:100px;text-align:center;top:776px;font-size:12px">剪切模量</div>
<div class="t" style="left:971px;width:100px;text-align:center;top:791px;font-size:12px">G [N/mm²]</div>
<div class="t" style="left:1071px;width:100px;text-align:center;top:776px;font-size:12px">泊松比</div>
<div class="t" style="left:1071px;width:100px;text-align:center;top:791px;font-size:12px">ν [--]</div>
<div class="t" style="left:1171px;width:100px;text-align:center;top:776px;font-size:12px">容重</div>
<div class="t" style="left:1171px;width:100px;text-align:center;top:791px;font-size:12px">γ [kN/m³]</div>
<div class="t" style="left:1271px;width:100px;text-align:center;top:776px;font-size:12px">密度</div>
<div class="t" style="left:1271px;width:100px;text-align:center;top:791px;font-size:12px">ρ [kg/m³]</div>
<div class="t" style="left:1371px;width:100px;text-align:center;top:776px;font-size:12px">热膨胀系数</div>
<div class="t" style="left:1371px;width:100px;text-align:center;top:791px;font-size:12px">α [1/°C]</div>
<div class="t" style="left:1501px;top:791px;font-size:12px;color:#1a1a1a;">选项</div>
<div class="t" style="left:221px;width:61px;text-align:center;top:807px;font-size:12px">1</div>
<div class="t" style="left:221px;width:61px;text-align:center;top:823px;font-size:12px">2</div>
<div class="t" style="left:221px;width:61px;text-align:center;top:839px;font-size:12px">3</div>
<div class="t" style="left:221px;width:61px;text-align:center;top:855px;font-size:12px">4</div>
<div class="t" style="left:221px;width:61px;text-align:center;top:871px;font-size:12px">5</div>
<div class="t" style="left:221px;width:61px;text-align:center;top:887px;font-size:12px">6</div>
<div class="t" style="left:221px;width:61px;text-align:center;top:903px;font-size:12px">7</div>
<div class="t" style="left:221px;width:61px;text-align:center;top:919px;font-size:12px">8</div>
<div class="t" style="left:221px;width:61px;text-align:center;top:935px;font-size:12px">9</div>
<div class="t" style="left:221px;width:61px;text-align:center;top:951px;font-size:12px">10</div>
<div class="t" style="left:221px;width:61px;text-align:center;top:967px;font-size:12px">11</div>
<div class="a" style="left:284px;top:806px;width:245px;height:15px;border:1px dotted #333;background:#fff"></div>
<div class="a" style="left:287px;top:809px;width:10px;height:10px;background:#8e8e8e"></div>
<div class="t" style="left:302px;top:808px;font-size:12px;color:#1a1a1a;">Q355</div>
<div class="a" style="left:287px;top:825px;width:10px;height:10px;background:#38e8e8"></div>
<div class="t" style="left:302px;top:824px;font-size:12px;color:#1a1a1a;">C30</div>
<div class="a" style="left:536px;top:809px;width:10px;height:10px;background:#d07030"></div>
<div class="t" style="left:551px;top:808px;font-size:12px;color:#1a1a1a;">钢材</div>
<div class="a" style="left:536px;top:825px;width:10px;height:10px;background:#e0c020"></div>
<div class="t" style="left:551px;top:824px;font-size:12px;color:#1a1a1a;">混凝土</div>
<div class="a" style="left:676px;top:809px;width:10px;height:10px;background:#ddf7f7"></div>
<div class="a" style="left:676px;top:825px;width:10px;height:10px;background:#ddf7f7"></div>
<div class="t" style="left:691px;top:808px;font-size:12px;color:#1a1a1a;">各向同性|线弹性</div>
<div class="t" style="left:691px;top:824px;font-size:12px;color:#1a1a1a;">各向同性|线弹性</div>
<div class="t" style="left:867.5px;width:100px;text-align:right;top:808px;font-size:11.5px">206000.0</div>
<div class="t" style="left:967.5px;width:100px;text-align:right;top:808px;font-size:11.5px">79000.0</div>
<div class="t" style="left:1067.5px;width:100px;text-align:right;top:808px;font-size:11.5px">0.304</div>
<div class="t" style="left:1167.5px;width:100px;text-align:right;top:808px;font-size:11.5px">78.50</div>
<div class="t" style="left:1267.5px;width:100px;text-align:right;top:808px;font-size:11.5px">7850.00</div>
<div class="t" style="left:1367.5px;width:100px;text-align:right;top:808px;font-size:11.5px">0.000012</div>
<div class="t" style="left:867.5px;width:100px;text-align:right;top:824px;font-size:11.5px">30000.0</div>
<div class="t" style="left:967.5px;width:100px;text-align:right;top:824px;font-size:11.5px">12000.0</div>
<div class="t" style="left:1067.5px;width:100px;text-align:right;top:824px;font-size:11.5px">0.200</div>
<div class="t" style="left:1167.5px;width:100px;text-align:right;top:824px;font-size:11.5px">24.00</div>
<div class="t" style="left:1267.5px;width:100px;text-align:right;top:824px;font-size:11.5px">2400.00</div>
<div class="t" style="left:1367.5px;width:100px;text-align:right;top:824px;font-size:11.5px">0.000010</div>
<div class="a" style="left:1476px;top:808px;width:10px;height:10px;background:#e8a070;border:1px solid #c06030"></div>
<div class="a" style="left:221px;top:981px;width:1430px;height:24px;background:#f0f0f0"></div>
<div class="a" style="left:347px;top:982px;width:61px;height:23px;background:#fafafa;border:1px solid #cfcfcf;border-top:none"></div>
<div class="t" style="left:347px;width:61px;text-align:center;top:988px;font-size:12px">材料</div>
<div class="a" style="left:408px;top:982px;width:61px;height:23px;background:#e6e6e6;border:1px solid #cfcfcf;border-top:none"></div>
<div class="t" style="left:408px;width:61px;text-align:center;top:988px;font-size:12px">截面</div>
<div class="a" style="left:469px;top:982px;width:61px;height:23px;background:#e6e6e6;border:1px solid #cfcfcf;border-top:none"></div>
<div class="t" style="left:469px;width:61px;text-align:center;top:988px;font-size:12px">厚度</div>
<div class="a" style="left:530px;top:982px;width:61px;height:23px;background:#e6e6e6;border:1px solid #cfcfcf;border-top:none"></div>
<div class="t" style="left:530px;width:61px;text-align:center;top:988px;font-size:12px">节点</div>
<div class="a" style="left:591px;top:982px;width:61px;height:23px;background:#e6e6e6;border:1px solid #cfcfcf;border-top:none"></div>
<div class="t" style="left:591px;width:61px;text-align:center;top:988px;font-size:12px">线</div>
<div class="a" style="left:652px;top:982px;width:61px;height:23px;background:#e6e6e6;border:1px solid #cfcfcf;border-top:none"></div>
<div class="t" style="left:652px;width:61px;text-align:center;top:988px;font-size:12px">杆件</div>
<div class="a" style="left:713px;top:982px;width:61px;height:23px;background:#e6e6e6;border:1px solid #cfcfcf;border-top:none"></div>
<div class="t" style="left:713px;width:61px;text-align:center;top:988px;font-size:12px">面</div>
<div class="a" style="left:774px;top:982px;width:61px;height:23px;background:#e6e6e6;border:1px solid #cfcfcf;border-top:none"></div>
<div class="t" style="left:774px;width:61px;text-align:center;top:988px;font-size:12px">洞口</div>
<div class="a" style="left:835px;top:982px;width:61px;height:23px;background:#e6e6e6;border:1px solid #cfcfcf;border-top:none"></div>
<div class="t" style="left:835px;width:61px;text-align:center;top:988px;font-size:12px">实体</div>
<div class="a" style="left:896px;top:982px;width:61px;height:23px;background:#e6e6e6;border:1px solid #cfcfcf;border-top:none"></div>
<div class="t" style="left:896px;width:61px;text-align:center;top:988px;font-size:12px">线集</div>
<div class="a" style="left:957px;top:982px;width:61px;height:23px;background:#e6e6e6;border:1px solid #cfcfcf;border-top:none"></div>
<div class="t" style="left:957px;width:61px;text-align:center;top:988px;font-size:12px">杆件集</div>
<div class="a" style="left:1018px;top:982px;width:61px;height:23px;background:#e6e6e6;border:1px solid #cfcfcf;border-top:none"></div>
<div class="t" style="left:1018px;width:61px;text-align:center;top:988px;font-size:12px">面集</div>
<div class="a" style="left:1079px;top:982px;width:61px;height:23px;background:#e6e6e6;border:1px solid #cfcfcf;border-top:none"></div>
<div class="t" style="left:1079px;width:61px;text-align:center;top:988px;font-size:12px">实体集</div>
<div class="t" style="left:265px;top:988px;font-size:12px;color:#1a1a1a;">1 of 13</div>
<svg class="a" style="left:225px;top:989px" width="120" height="10"><rect x="0" y="0" width="1.5" height="9" fill="#888"/><polygon points="8,0 2,4.5 8,9" fill="#888"/><polygon points="24,0 18,4.5 24,9" fill="#888"/><polygon points="92,0 98,4.5 92,9" fill="#333"/><polygon points="108,0 114,4.5 108,9" fill="#333"/><rect x="114" y="0" width="1.5" height="9" fill="#333"/></svg>
<div class="a" style="left:776px;top:737px;width:24px;height:23px;background:#cde4f7;border:1px solid #a8d0f0"></div>
<div class="a" style="left:803px;top:737px;width:24px;height:23px;background:#cde4f7;border:1px solid #a8d0f0"></div>
<svg class="a" style="left:778px;top:739.5px" width="19" height="19" viewBox="0 0 20 20"><rect x="0" y="0" width="20" height="20" fill="#cfe3f5" stroke="#8ab8e0"/><path d="M5,4 H13 V10" fill="none" stroke="#333" stroke-width="1.3"/><path d="M9,8 Q14,12 12,17" fill="none" stroke="#3070c0" stroke-width="1.8"/></svg>
<svg class="a" style="left:805px;top:739.5px" width="19" height="19" viewBox="0 0 20 20"><rect x="0" y="0" width="20" height="20" fill="#cfe3f5" stroke="#8ab8e0"/><path d="M15,4 H7 V10" fill="none" stroke="#333" stroke-width="1.3"/><path d="M11,8 Q6,12 8,17" fill="none" stroke="#3070c0" stroke-width="1.8"/></svg>
<svg class="a" style="left:836px;top:739.0px" width="20" height="20" viewBox="0 0 20 20"><rect x="1" y="3" width="18" height="14" fill="#e0e0e0" stroke="#888"/><g fill="#999"><rect x="1" y="7" width="18" height="1"/><rect x="1" y="11" width="18" height="1"/></g></svg>
<svg class="a" style="left:862px;top:739.0px" width="20" height="20" viewBox="0 0 20 20"><rect x="1" y="7" width="18" height="11" fill="#eee" stroke="#aaa"/><path d="M5,7 V3 H15 V7" fill="none" stroke="#aaa"/></svg>
<svg class="a" style="left:888px;top:739.0px" width="20" height="20" viewBox="0 0 20 20"><rect x="1" y="2" width="18" height="16" fill="#ddd" stroke="#999"/><path d="M10,5 V15 M5,10 H15" stroke="#aaa" stroke-width="2.5"/></svg>
<svg class="a" style="left:914px;top:739.0px" width="20" height="20" viewBox="0 0 20 20"><rect x="1" y="2" width="18" height="16" fill="#ddd" stroke="#999"/><path d="M5,5 L15,15 M15,5 L5,15" stroke="#bbb" stroke-width="2.5"/></svg>
<svg class="a" style="left:940px;top:739.0px" width="20" height="20" viewBox="0 0 20 20"><rect x="1" y="2" width="18" height="16" fill="#ddd" stroke="#999"/><path d="M10,5 V15" stroke="#aaa" stroke-width="2.5"/></svg>
<svg class="a" style="left:973px;top:739.0px" width="20" height="20" viewBox="0 0 20 20"><rect x="1" y="2" width="18" height="16" fill="#ccc" stroke="#777"/><path d="M4,5 L16,16 M16,5 L4,16" stroke="#555" stroke-width="3"/></svg>
<svg class="a" style="left:1005px;top:739.0px" width="20" height="20" viewBox="0 0 20 20"><rect x="2" y="8" width="10" height="9" fill="#aaa"/><path d="M6,4 H16 V12" fill="none" stroke="#777" stroke-width="2"/><polygon points="13,12 19,12 16,16" fill="#777"/></svg>
<svg class="a" style="left:1033px;top:739.0px" width="20" height="20" viewBox="0 0 20 20"><path d="M2,6 H8 M2,10 H8 M2,14 H8" stroke="#aaa" stroke-width="2"/><path d="M11,5 L18,15 M18,5 L11,15" stroke="#999" stroke-width="2"/></svg>
<svg class="a" style="left:1059px;top:739.0px" width="20" height="20" viewBox="0 0 20 20"><path d="M12,6 H18 M12,14 H18" stroke="#aaa" stroke-width="2"/><path d="M2,10 H14" stroke="#999" stroke-width="2"/><polygon points="1,10 6,6 6,14" fill="#999"/></svg>
<svg class="a" style="left:1085px;top:739.0px" width="20" height="20" viewBox="0 0 20 20"><path d="M2,6 H8 M2,14 H8" stroke="#aaa" stroke-width="2"/><path d="M6,10 H16" stroke="#999" stroke-width="2"/><polygon points="19,10 14,6 14,14" fill="#999"/></svg>
<svg class="a" style="left:1118px;top:739.0px" width="20" height="20" viewBox="0 0 20 20"><rect x="2" y="2" width="16" height="16" fill="#fff" stroke="#555" stroke-width="1.5"/><rect x="2" y="2" width="16" height="5" fill="#555"/></svg>
<svg class="a" style="left:1151px;top:739.0px" width="20" height="20" viewBox="0 0 20 20"><rect x="8" y="2" width="10" height="7" fill="#f0f0f0" stroke="#404060"/><rect x="8" y="2" width="10" height="2" fill="#404060"/><text x="1" y="18" font-size="8" font-style="italic" font-weight="bold" fill="#333">ab</text><rect x="13" y="15" width="5" height="1" fill="#333"/></svg>
<svg class="a" style="left:1177px;top:739.0px" width="20" height="20" viewBox="0 0 20 20"><text x="2" y="15" font-size="13" font-style="italic" font-family="Liberation Serif" fill="#888">fx</text></svg>
<svg class="a" style="left:1202px;top:739.0px" width="20" height="20" viewBox="0 0 20 20"><text x="2" y="16" font-size="13" font-style="italic" font-family="Liberation Serif" fill="#777">fx</text><path d="M12,2 L18,8 M18,2 L12,8" stroke="#888" stroke-width="1.5"/></svg>
<svg class="a" style="left:1227px;top:739.0px" width="20" height="20" viewBox="0 0 20 20"><text x="2" y="17" font-size="13" font-style="italic" font-family="Liberation Serif" fill="#333">fx</text><ellipse cx="14" cy="5" rx="5" ry="3" fill="#f0f0f0" stroke="#333"/><circle cx="14" cy="5" r="1.3" fill="#333"/></svg>
<svg class="a" style="left:1262px;top:739.0px" width="20" height="20" viewBox="0 0 20 20"><rect x="3" y="2" width="15" height="16" fill="#f0f0f0" stroke="#777"/><rect x="1" y="5" width="10" height="10" fill="#2a8a4a"/><text x="3" y="13" font-size="8" font-weight="bold" fill="#fff">X</text><polygon points="10,14 16,14 13,18" fill="#2a8a4a"/></svg>
<svg class="a" style="left:1295px;top:739.0px" width="20" height="20" viewBox="0 0 20 20"><rect x="1" y="7" width="18" height="11" fill="#444"/><rect x="3" y="9" width="14" height="7" fill="#e8e8e8"/><polygon points="1,3 17,1 18,5 2,7" fill="#c04040"/><rect x="5" y="11" width="10" height="3" fill="#6a9ad0"/></svg>
<svg class="a" style="left:1323px;top:739.0px" width="20" height="20" viewBox="0 0 20 20"><rect x="1" y="1" width="18" height="4" fill="#5aa05a"/><text x="1" y="16" font-size="10" font-weight="bold" fill="#222">0,00</text><rect x="1" y="17" width="18" height="1" fill="#333"/></svg>
<svg class="a" style="left:1356px;top:739.0px" width="20" height="20" viewBox="0 0 20 20"><path d="M4,17 L4,12 Q2,5 9,3 Q17,2 17,9 Q17,15 9,15 Z" fill="#3a3a3a"/><text x="6.5" y="13" font-size="9" font-weight="bold" fill="#fff">?</text></svg>
<div class="a" style="left:832px;top:738px;width:1px;height:22px;background:#d6d6d6"></div>
<div class="a" style="left:967px;top:738px;width:1px;height:22px;background:#d6d6d6"></div>
<div class="a" style="left:1002px;top:738px;width:1px;height:22px;background:#d6d6d6"></div>
<div class="a" style="left:1113px;top:738px;width:1px;height:22px;background:#d6d6d6"></div>
<div class="a" style="left:1145px;top:738px;width:1px;height:22px;background:#d6d6d6"></div>
<div class="a" style="left:1254px;top:738px;width:1px;height:22px;background:#d6d6d6"></div>
<div class="a" style="left:1289px;top:738px;width:1px;height:22px;background:#d6d6d6"></div>
<div class="a" style="left:1319px;top:738px;width:1px;height:22px;background:#d6d6d6"></div>
<div class="a" style="left:1351px;top:738px;width:1px;height:22px;background:#d6d6d6"></div>
<div class="a" style="left:0px;top:1005px;width:1651px;height:27px;background:#f0f0f0"></div>
<div class="a" style="left:997px;top:1011px;width:32px;height:20px;background:#e2e2e2;border:1px solid #cacaca"></div>
<div class="a" style="left:1099px;top:1011px;width:56px;height:20px;background:#e2e2e2;border:1px solid #cacaca"></div>
<div class="t" style="left:1001px;top:1015px;font-size:12px;color:#1a1a1a;">捕捉</div>
<div class="t" style="left:1035px;top:1015px;font-size:12px;color:#1a1a1a;">栅格</div>
<div class="t" style="left:1068px;top:1015px;font-size:12px;color:#1a1a1a;">轴网</div>
<div class="t" style="left:1102px;top:1015px;font-size:12px;color:#1a1a1a;">对象捕捉</div>
<div class="a" style="left:1230px;top:1010px;width:1px;height:22px;background:#d8d8d8"></div>
<div class="a" style="left:1335px;top:1010px;width:1px;height:22px;background:#d8d8d8"></div>
<div class="a" style="left:1492px;top:1010px;width:1px;height:22px;background:#d8d8d8"></div>
<div class="a" style="left:1557px;top:1010px;width:1px;height:22px;background:#d8d8d8"></div>
<div class="a" style="left:1634px;top:1010px;width:1px;height:22px;background:#d8d8d8"></div>
<div class="t" style="left:1341px;top:1015px;font-size:12px;color:#1a1a1a;">坐标系CS: 全局 XYZ</div>
<div class="t" style="left:1497px;top:1015px;font-size:12px;color:#1a1a1a;">平面: XY</div>
<div class="t" style="left:1563px;top:1015px;font-size:12px;color:#1a1a1a;">X: -2.994 m</div>
<div class="t" style="left:1637px;top:1015px;font-size:12px;color:#1a1a1a;">Y:</div>
<svg class="a" style="left:178px;top:106px" width="40" height="14"><rect x="1.5" y="4.5" width="7" height="7" fill="none" stroke="#333" stroke-width="1.3"/><polyline points="4,4 4,1.5 11,1.5 11,8.5 9,8.5" fill="none" stroke="#333" stroke-width="1.3"/><line x1="23" y1="3" x2="31" y2="11" stroke="#222" stroke-width="1.8"/><line x1="31" y1="3" x2="23" y2="11" stroke="#222" stroke-width="1.8"/></svg>
</body></html>
